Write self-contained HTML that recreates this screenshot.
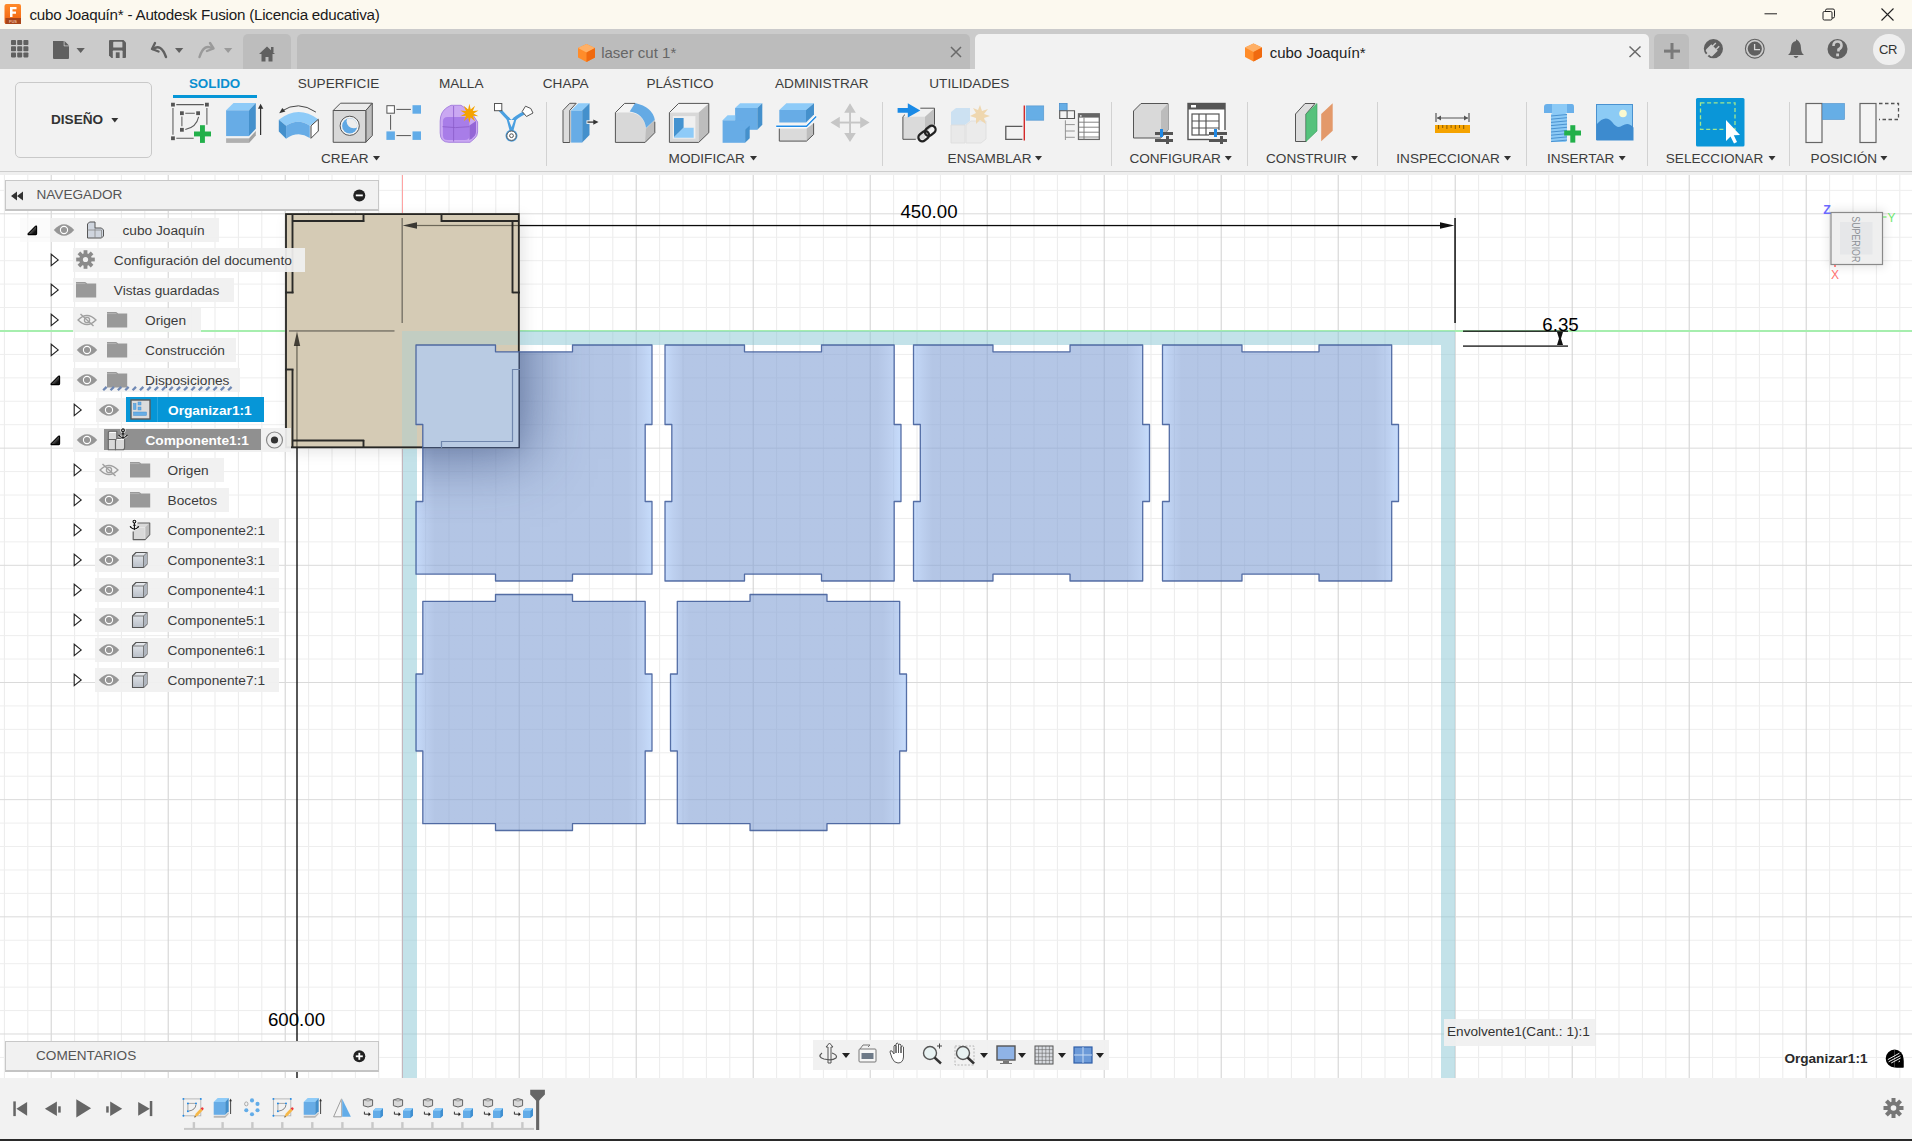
<!DOCTYPE html>
<html><head><meta charset="utf-8"><title>Fusion</title><style>
*{margin:0;padding:0;box-sizing:border-box}
html,body{width:1912px;height:1141px;overflow:hidden;background:#fff;
 font-family:"Liberation Sans",sans-serif}
.t{position:absolute;white-space:nowrap;line-height:1}
.b{position:absolute}
.s{position:absolute;overflow:visible}
</style></head>
<body>
<svg class="s" style="left:0;top:0" width="1912" height="1141" viewBox="0 0 1912 1141"><rect x="3.90" y="175" width="1" height="903" fill="#ebebeb"/><rect x="27.30" y="175" width="1" height="903" fill="#ebebeb"/><rect x="74.10" y="175" width="1" height="903" fill="#ebebeb"/><rect x="97.50" y="175" width="1" height="903" fill="#ebebeb"/><rect x="120.90" y="175" width="1" height="903" fill="#ebebeb"/><rect x="144.30" y="175" width="1" height="903" fill="#ebebeb"/><rect x="191.10" y="175" width="1" height="903" fill="#ebebeb"/><rect x="214.50" y="175" width="1" height="903" fill="#ebebeb"/><rect x="237.90" y="175" width="1" height="903" fill="#ebebeb"/><rect x="261.30" y="175" width="1" height="903" fill="#ebebeb"/><rect x="308.10" y="175" width="1" height="903" fill="#ebebeb"/><rect x="331.50" y="175" width="1" height="903" fill="#ebebeb"/><rect x="354.90" y="175" width="1" height="903" fill="#ebebeb"/><rect x="378.30" y="175" width="1" height="903" fill="#ebebeb"/><rect x="425.10" y="175" width="1" height="903" fill="#ebebeb"/><rect x="448.50" y="175" width="1" height="903" fill="#ebebeb"/><rect x="471.90" y="175" width="1" height="903" fill="#ebebeb"/><rect x="495.30" y="175" width="1" height="903" fill="#ebebeb"/><rect x="542.10" y="175" width="1" height="903" fill="#ebebeb"/><rect x="565.50" y="175" width="1" height="903" fill="#ebebeb"/><rect x="588.90" y="175" width="1" height="903" fill="#ebebeb"/><rect x="612.30" y="175" width="1" height="903" fill="#ebebeb"/><rect x="659.10" y="175" width="1" height="903" fill="#ebebeb"/><rect x="682.50" y="175" width="1" height="903" fill="#ebebeb"/><rect x="705.90" y="175" width="1" height="903" fill="#ebebeb"/><rect x="729.30" y="175" width="1" height="903" fill="#ebebeb"/><rect x="776.10" y="175" width="1" height="903" fill="#ebebeb"/><rect x="799.50" y="175" width="1" height="903" fill="#ebebeb"/><rect x="822.90" y="175" width="1" height="903" fill="#ebebeb"/><rect x="846.30" y="175" width="1" height="903" fill="#ebebeb"/><rect x="893.10" y="175" width="1" height="903" fill="#ebebeb"/><rect x="916.50" y="175" width="1" height="903" fill="#ebebeb"/><rect x="939.90" y="175" width="1" height="903" fill="#ebebeb"/><rect x="963.30" y="175" width="1" height="903" fill="#ebebeb"/><rect x="1010.10" y="175" width="1" height="903" fill="#ebebeb"/><rect x="1033.50" y="175" width="1" height="903" fill="#ebebeb"/><rect x="1056.90" y="175" width="1" height="903" fill="#ebebeb"/><rect x="1080.30" y="175" width="1" height="903" fill="#ebebeb"/><rect x="1127.10" y="175" width="1" height="903" fill="#ebebeb"/><rect x="1150.50" y="175" width="1" height="903" fill="#ebebeb"/><rect x="1173.90" y="175" width="1" height="903" fill="#ebebeb"/><rect x="1197.30" y="175" width="1" height="903" fill="#ebebeb"/><rect x="1244.10" y="175" width="1" height="903" fill="#ebebeb"/><rect x="1267.50" y="175" width="1" height="903" fill="#ebebeb"/><rect x="1290.90" y="175" width="1" height="903" fill="#ebebeb"/><rect x="1314.30" y="175" width="1" height="903" fill="#ebebeb"/><rect x="1361.10" y="175" width="1" height="903" fill="#ebebeb"/><rect x="1384.50" y="175" width="1" height="903" fill="#ebebeb"/><rect x="1407.90" y="175" width="1" height="903" fill="#ebebeb"/><rect x="1431.30" y="175" width="1" height="903" fill="#ebebeb"/><rect x="1478.10" y="175" width="1" height="903" fill="#ebebeb"/><rect x="1501.50" y="175" width="1" height="903" fill="#ebebeb"/><rect x="1524.90" y="175" width="1" height="903" fill="#ebebeb"/><rect x="1548.30" y="175" width="1" height="903" fill="#ebebeb"/><rect x="1595.10" y="175" width="1" height="903" fill="#ebebeb"/><rect x="1618.50" y="175" width="1" height="903" fill="#ebebeb"/><rect x="1641.90" y="175" width="1" height="903" fill="#ebebeb"/><rect x="1665.30" y="175" width="1" height="903" fill="#ebebeb"/><rect x="1712.10" y="175" width="1" height="903" fill="#ebebeb"/><rect x="1735.50" y="175" width="1" height="903" fill="#ebebeb"/><rect x="1758.90" y="175" width="1" height="903" fill="#ebebeb"/><rect x="1782.30" y="175" width="1" height="903" fill="#ebebeb"/><rect x="1829.10" y="175" width="1" height="903" fill="#ebebeb"/><rect x="1852.50" y="175" width="1" height="903" fill="#ebebeb"/><rect x="1875.90" y="175" width="1" height="903" fill="#ebebeb"/><rect x="1899.30" y="175" width="1" height="903" fill="#ebebeb"/><rect x="0" y="189.87" width="1912" height="1" fill="#eeeeee"/><rect x="0" y="236.73" width="1912" height="1" fill="#eeeeee"/><rect x="0" y="260.17" width="1912" height="1" fill="#eeeeee"/><rect x="0" y="283.60" width="1912" height="1" fill="#eeeeee"/><rect x="0" y="307.04" width="1912" height="1" fill="#eeeeee"/><rect x="0" y="353.90" width="1912" height="1" fill="#eeeeee"/><rect x="0" y="377.34" width="1912" height="1" fill="#eeeeee"/><rect x="0" y="400.77" width="1912" height="1" fill="#eeeeee"/><rect x="0" y="424.21" width="1912" height="1" fill="#eeeeee"/><rect x="0" y="471.07" width="1912" height="1" fill="#eeeeee"/><rect x="0" y="494.51" width="1912" height="1" fill="#eeeeee"/><rect x="0" y="517.94" width="1912" height="1" fill="#eeeeee"/><rect x="0" y="541.38" width="1912" height="1" fill="#eeeeee"/><rect x="0" y="588.24" width="1912" height="1" fill="#eeeeee"/><rect x="0" y="611.68" width="1912" height="1" fill="#eeeeee"/><rect x="0" y="635.11" width="1912" height="1" fill="#eeeeee"/><rect x="0" y="658.55" width="1912" height="1" fill="#eeeeee"/><rect x="0" y="705.41" width="1912" height="1" fill="#eeeeee"/><rect x="0" y="728.85" width="1912" height="1" fill="#eeeeee"/><rect x="0" y="752.28" width="1912" height="1" fill="#eeeeee"/><rect x="0" y="775.72" width="1912" height="1" fill="#eeeeee"/><rect x="0" y="822.58" width="1912" height="1" fill="#eeeeee"/><rect x="0" y="846.02" width="1912" height="1" fill="#eeeeee"/><rect x="0" y="869.45" width="1912" height="1" fill="#eeeeee"/><rect x="0" y="892.89" width="1912" height="1" fill="#eeeeee"/><rect x="0" y="939.75" width="1912" height="1" fill="#eeeeee"/><rect x="0" y="963.19" width="1912" height="1" fill="#eeeeee"/><rect x="0" y="986.62" width="1912" height="1" fill="#eeeeee"/><rect x="0" y="1010.06" width="1912" height="1" fill="#eeeeee"/><rect x="0" y="1056.92" width="1912" height="1" fill="#eeeeee"/><rect x="50.70" y="175" width="1" height="903" fill="#d0d0d0"/><rect x="167.70" y="175" width="1" height="903" fill="#d0d0d0"/><rect x="284.70" y="175" width="1" height="903" fill="#d0d0d0"/><rect x="401.70" y="175" width="1" height="903" fill="#d0d0d0"/><rect x="518.70" y="175" width="1" height="903" fill="#d0d0d0"/><rect x="635.70" y="175" width="1" height="903" fill="#d0d0d0"/><rect x="752.70" y="175" width="1" height="903" fill="#d0d0d0"/><rect x="869.70" y="175" width="1" height="903" fill="#d0d0d0"/><rect x="986.70" y="175" width="1" height="903" fill="#d0d0d0"/><rect x="1103.70" y="175" width="1" height="903" fill="#d0d0d0"/><rect x="1220.70" y="175" width="1" height="903" fill="#d0d0d0"/><rect x="1337.70" y="175" width="1" height="903" fill="#d0d0d0"/><rect x="1454.70" y="175" width="1" height="903" fill="#d0d0d0"/><rect x="1571.70" y="175" width="1" height="903" fill="#d0d0d0"/><rect x="1688.70" y="175" width="1" height="903" fill="#d0d0d0"/><rect x="1805.70" y="175" width="1" height="903" fill="#d0d0d0"/><rect x="0" y="213.30" width="1912" height="1" fill="#dadada"/><rect x="0" y="330.47" width="1912" height="1" fill="#dadada"/><rect x="0" y="447.64" width="1912" height="1" fill="#dadada"/><rect x="0" y="564.81" width="1912" height="1" fill="#dadada"/><rect x="0" y="681.98" width="1912" height="1" fill="#dadada"/><rect x="0" y="799.15" width="1912" height="1" fill="#dadada"/><rect x="0" y="916.32" width="1912" height="1" fill="#dadada"/><rect x="0" y="1033.49" width="1912" height="1" fill="#dadada"/></svg>
<div class="b" style="left:402px;top:175px;width:1px;height:903px;background:#ffa3a3"></div>
<div class="b" style="left:0px;top:330.4px;width:1912px;height:1.2px;background:#a6eeae"></div>
<div class="b" style="left:285px;top:213.2px;width:234.8px;height:235px;background:#d5cbb5;box-shadow:4px 4px 14px rgba(0,0,0,0.10)"></div>
<div class="b" style="left:402px;top:331px;width:15px;height:747px;background:rgba(140,200,212,0.52)"></div>
<div class="b" style="left:417px;top:331px;width:1024px;height:14px;background:rgba(140,200,212,0.52)"></div>
<div class="b" style="left:402px;top:331px;width:117.5px;height:14px;background:#c2cdc2"></div>
<div class="b" style="left:402px;top:345px;width:15px;height:103.5px;background:#c2cdc2"></div>
<div class="b" style="left:1441px;top:331px;width:14px;height:747px;background:rgba(140,200,212,0.52)"></div>
<svg class="s" style="left:0px;top:0px;" width="1912" height="1141" viewBox="0 0 1912 1141"><rect x="286" y="214.1" width="232.8" height="233.2" fill="none" stroke="#262624" stroke-width="1.8"/><line x1="292.5" y1="221" x2="364.2" y2="221" stroke="#2a2a28" stroke-width="1.9"/><line x1="363.5" y1="214" x2="363.5" y2="222" stroke="#2a2a28" stroke-width="1.9"/><line x1="292.5" y1="214" x2="292.5" y2="293.2" stroke="#2a2a28" stroke-width="1.9"/><line x1="285" y1="292.5" x2="293.5" y2="292.5" stroke="#2a2a28" stroke-width="1.9"/><line x1="441.5" y1="221" x2="519" y2="221" stroke="#2a2a28" stroke-width="1.9"/><line x1="441.5" y1="214" x2="441.5" y2="222" stroke="#2a2a28" stroke-width="1.9"/><line x1="512.5" y1="221" x2="512.5" y2="293.2" stroke="#2a2a28" stroke-width="1.9"/><line x1="512.5" y1="292.5" x2="520" y2="292.5" stroke="#2a2a28" stroke-width="1.9"/><line x1="292.5" y1="369.5" x2="292.5" y2="448" stroke="#2a2a28" stroke-width="1.9"/><line x1="285" y1="369.5" x2="293.5" y2="369.5" stroke="#2a2a28" stroke-width="1.9"/><line x1="292.5" y1="440.5" x2="364.2" y2="440.5" stroke="#2a2a28" stroke-width="1.9"/><line x1="363.5" y1="440" x2="363.5" y2="448" stroke="#2a2a28" stroke-width="1.9"/><line x1="441.5" y1="440.5" x2="512.5" y2="440.5" stroke="#2a2a28" stroke-width="1.9"/><line x1="441.5" y1="440" x2="441.5" y2="448" stroke="#2a2a28" stroke-width="1.9"/><line x1="512.5" y1="369.5" x2="512.5" y2="448" stroke="#2a2a28" stroke-width="1.9"/><line x1="512.5" y1="369.5" x2="520" y2="369.5" stroke="#2a2a28" stroke-width="1.9"/></svg>
<svg class="s" style="left:0px;top:0px;" width="1912" height="1141" viewBox="0 0 1912 1141"><defs><filter id="bl30" x="-80%" y="-80%" width="260%" height="260%"><feGaussianBlur stdDeviation="28"/></filter><linearGradient id="pg" x1="0" y1="0" x2="1" y2="0"><stop offset="0" stop-color="rgb(168,200,248)" stop-opacity="0.66"/><stop offset="0.035" stop-color="rgb(150,180,230)" stop-opacity="0.63"/><stop offset="0.08" stop-color="rgb(134,163,214)" stop-opacity="0.62"/><stop offset="0.9" stop-color="rgb(134,163,214)" stop-opacity="0.62"/><stop offset="0.955" stop-color="rgb(150,180,230)" stop-opacity="0.63"/><stop offset="1" stop-color="rgb(172,204,250)" stop-opacity="0.68"/></linearGradient><clipPath id="pc0"><polygon points="416.0,345.0 495.5,345.0 495.5,351.8 572.5,351.8 572.5,345.0 652.0,345.0 652.0,424.5 645.2,424.5 645.2,501.5 652.0,501.5 652.0,574.2 572.5,574.2 572.5,581.0 495.5,581.0 495.5,574.2 416.0,574.2 416.0,501.5 422.8,501.5 422.8,424.5 416.0,424.5"/></clipPath><clipPath id="pc1"><polygon points="665.0,345.0 744.5,345.0 744.5,351.8 821.5,351.8 821.5,345.0 894.2,345.0 894.2,424.5 901.0,424.5 901.0,501.5 894.2,501.5 894.2,581.0 821.5,581.0 821.5,574.2 744.5,574.2 744.5,581.0 665.0,581.0 665.0,501.5 671.8,501.5 671.8,424.5 665.0,424.5"/></clipPath><clipPath id="pc2"><polygon points="913.5,345.0 993.0,345.0 993.0,351.8 1070.0,351.8 1070.0,345.0 1142.7,345.0 1142.7,424.5 1149.5,424.5 1149.5,501.5 1142.7,501.5 1142.7,581.0 1070.0,581.0 1070.0,574.2 993.0,574.2 993.0,581.0 913.5,581.0 913.5,501.5 920.3,501.5 920.3,424.5 913.5,424.5"/></clipPath><clipPath id="pc3"><polygon points="1162.5,345.0 1242.0,345.0 1242.0,351.8 1319.0,351.8 1319.0,345.0 1391.7,345.0 1391.7,424.5 1398.5,424.5 1398.5,501.5 1391.7,501.5 1391.7,581.0 1319.0,581.0 1319.0,574.2 1242.0,574.2 1242.0,581.0 1162.5,581.0 1162.5,501.5 1169.3,501.5 1169.3,424.5 1162.5,424.5"/></clipPath><clipPath id="pc4"><polygon points="422.8,601.3 495.5,601.3 495.5,594.5 572.5,594.5 572.5,601.3 645.2,601.3 645.2,674.0 652.0,674.0 652.0,751.0 645.2,751.0 645.2,823.7 572.5,823.7 572.5,830.5 495.5,830.5 495.5,823.7 422.8,823.7 422.8,751.0 416.0,751.0 416.0,674.0 422.8,674.0"/></clipPath><clipPath id="pc5"><polygon points="677.3,601.3 750.0,601.3 750.0,594.5 827.0,594.5 827.0,601.3 899.7,601.3 899.7,674.0 906.5,674.0 906.5,751.0 899.7,751.0 899.7,823.7 827.0,823.7 827.0,830.5 750.0,830.5 750.0,823.7 677.3,823.7 677.3,751.0 670.5,751.0 670.5,674.0 677.3,674.0"/></clipPath><clipPath id="beigeclip"><rect x="285" y="214" width="235" height="235"/></clipPath></defs><polygon points="416.0,345.0 495.5,345.0 495.5,351.8 572.5,351.8 572.5,345.0 652.0,345.0 652.0,424.5 645.2,424.5 645.2,501.5 652.0,501.5 652.0,574.2 572.5,574.2 572.5,581.0 495.5,581.0 495.5,574.2 416.0,574.2 416.0,501.5 422.8,501.5 422.8,424.5 416.0,424.5" fill="url(#pg)"/><polygon points="665.0,345.0 744.5,345.0 744.5,351.8 821.5,351.8 821.5,345.0 894.2,345.0 894.2,424.5 901.0,424.5 901.0,501.5 894.2,501.5 894.2,581.0 821.5,581.0 821.5,574.2 744.5,574.2 744.5,581.0 665.0,581.0 665.0,501.5 671.8,501.5 671.8,424.5 665.0,424.5" fill="url(#pg)"/><polygon points="913.5,345.0 993.0,345.0 993.0,351.8 1070.0,351.8 1070.0,345.0 1142.7,345.0 1142.7,424.5 1149.5,424.5 1149.5,501.5 1142.7,501.5 1142.7,581.0 1070.0,581.0 1070.0,574.2 993.0,574.2 993.0,581.0 913.5,581.0 913.5,501.5 920.3,501.5 920.3,424.5 913.5,424.5" fill="url(#pg)"/><polygon points="1162.5,345.0 1242.0,345.0 1242.0,351.8 1319.0,351.8 1319.0,345.0 1391.7,345.0 1391.7,424.5 1398.5,424.5 1398.5,501.5 1391.7,501.5 1391.7,581.0 1319.0,581.0 1319.0,574.2 1242.0,574.2 1242.0,581.0 1162.5,581.0 1162.5,501.5 1169.3,501.5 1169.3,424.5 1162.5,424.5" fill="url(#pg)"/><polygon points="422.8,601.3 495.5,601.3 495.5,594.5 572.5,594.5 572.5,601.3 645.2,601.3 645.2,674.0 652.0,674.0 652.0,751.0 645.2,751.0 645.2,823.7 572.5,823.7 572.5,830.5 495.5,830.5 495.5,823.7 422.8,823.7 422.8,751.0 416.0,751.0 416.0,674.0 422.8,674.0" fill="url(#pg)"/><polygon points="677.3,601.3 750.0,601.3 750.0,594.5 827.0,594.5 827.0,601.3 899.7,601.3 899.7,674.0 906.5,674.0 906.5,751.0 899.7,751.0 899.7,823.7 827.0,823.7 827.0,830.5 750.0,830.5 750.0,823.7 677.3,823.7 677.3,751.0 670.5,751.0 670.5,674.0 677.3,674.0" fill="url(#pg)"/></svg>
<div class="b" style="left:0;top:0;width:1912px;height:1141px;clip-path:polygon(416.0px 345.0px, 495.5px 345.0px, 495.5px 351.8px, 572.5px 351.8px, 572.5px 345.0px, 652.0px 345.0px, 652.0px 424.5px, 645.2px 424.5px, 645.2px 501.5px, 652.0px 501.5px, 652.0px 574.2px, 572.5px 574.2px, 572.5px 581.0px, 495.5px 581.0px, 495.5px 574.2px, 416.0px 574.2px, 416.0px 501.5px, 422.8px 501.5px, 422.8px 424.5px, 416.0px 424.5px)"><div class="b" style="left:285px;top:214px;width:235px;height:235px;box-shadow:10px 10px 56px 0px rgba(30,50,100,0.5)"></div></div>
<svg class="s" style="left:0px;top:0px;" width="1912" height="1141" viewBox="0 0 1912 1141"><defs><clipPath id="pcx0"><polygon points="416.0,345.0 495.5,345.0 495.5,351.8 572.5,351.8 572.5,345.0 652.0,345.0 652.0,424.5 645.2,424.5 645.2,501.5 652.0,501.5 652.0,574.2 572.5,574.2 572.5,581.0 495.5,581.0 495.5,574.2 416.0,574.2 416.0,501.5 422.8,501.5 422.8,424.5 416.0,424.5"/></clipPath></defs><g clip-path="url(#pcx0)"><rect x="285" y="214" width="235" height="235" fill="rgb(185,203,227)"/><rect x="285.6" y="214" width="233.6" height="233.8" fill="none" stroke="#2e3b58" stroke-width="1.4"/><g stroke="#6f86ad" stroke-width="1.2" fill="none"><path d="M441.5,448 V441.5 H512.5 V369.5 H520"/></g></g><polygon points="416.0,345.0 495.5,345.0 495.5,351.8 572.5,351.8 572.5,345.0 652.0,345.0 652.0,424.5 645.2,424.5 645.2,501.5 652.0,501.5 652.0,574.2 572.5,574.2 572.5,581.0 495.5,581.0 495.5,574.2 416.0,574.2 416.0,501.5 422.8,501.5 422.8,424.5 416.0,424.5" fill="none" stroke="rgba(60,88,150,0.85)" stroke-width="1.3" stroke-linejoin="round"/><polygon points="665.0,345.0 744.5,345.0 744.5,351.8 821.5,351.8 821.5,345.0 894.2,345.0 894.2,424.5 901.0,424.5 901.0,501.5 894.2,501.5 894.2,581.0 821.5,581.0 821.5,574.2 744.5,574.2 744.5,581.0 665.0,581.0 665.0,501.5 671.8,501.5 671.8,424.5 665.0,424.5" fill="none" stroke="rgba(60,88,150,0.85)" stroke-width="1.3" stroke-linejoin="round"/><polygon points="913.5,345.0 993.0,345.0 993.0,351.8 1070.0,351.8 1070.0,345.0 1142.7,345.0 1142.7,424.5 1149.5,424.5 1149.5,501.5 1142.7,501.5 1142.7,581.0 1070.0,581.0 1070.0,574.2 993.0,574.2 993.0,581.0 913.5,581.0 913.5,501.5 920.3,501.5 920.3,424.5 913.5,424.5" fill="none" stroke="rgba(60,88,150,0.85)" stroke-width="1.3" stroke-linejoin="round"/><polygon points="1162.5,345.0 1242.0,345.0 1242.0,351.8 1319.0,351.8 1319.0,345.0 1391.7,345.0 1391.7,424.5 1398.5,424.5 1398.5,501.5 1391.7,501.5 1391.7,581.0 1319.0,581.0 1319.0,574.2 1242.0,574.2 1242.0,581.0 1162.5,581.0 1162.5,501.5 1169.3,501.5 1169.3,424.5 1162.5,424.5" fill="none" stroke="rgba(60,88,150,0.85)" stroke-width="1.3" stroke-linejoin="round"/><polygon points="422.8,601.3 495.5,601.3 495.5,594.5 572.5,594.5 572.5,601.3 645.2,601.3 645.2,674.0 652.0,674.0 652.0,751.0 645.2,751.0 645.2,823.7 572.5,823.7 572.5,830.5 495.5,830.5 495.5,823.7 422.8,823.7 422.8,751.0 416.0,751.0 416.0,674.0 422.8,674.0" fill="none" stroke="rgba(60,88,150,0.85)" stroke-width="1.3" stroke-linejoin="round"/><polygon points="677.3,601.3 750.0,601.3 750.0,594.5 827.0,594.5 827.0,601.3 899.7,601.3 899.7,674.0 906.5,674.0 906.5,751.0 899.7,751.0 899.7,823.7 827.0,823.7 827.0,830.5 750.0,830.5 750.0,823.7 677.3,823.7 677.3,751.0 670.5,751.0 670.5,674.0 677.3,674.0" fill="none" stroke="rgba(60,88,150,0.85)" stroke-width="1.3" stroke-linejoin="round"/></svg>
<svg class="s" style="left:0px;top:0px;" width="1912" height="1141" viewBox="0 0 1912 1141"><rect x="417" y="224.9" width="102.5" height="1.2" fill="rgba(40,36,28,0.6)"/><rect x="519.5" y="224.9" width="921" height="1.3" fill="#0a0a0a"/><path d="M402.6,225.5 L417,222.3 L417,228.7 Z" fill="rgba(15,15,15,0.78)"/><path d="M1454.4,225.5 L1440,222.3 L1440,228.7 Z" fill="#111"/><rect x="1454.3" y="218" width="1.5" height="105" fill="#111"/><rect x="401.6" y="218" width="1.1" height="105" fill="rgba(15,15,15,0.6)"/><rect x="289" y="330.4" width="105.5" height="1.1" fill="rgba(15,15,15,0.6)"/><rect x="296.3" y="345" width="1.3" height="103" fill="rgba(40,36,28,0.6)"/><rect x="296.3" y="448" width="1.4" height="630" fill="#111"/><path d="M297,331.5 L293.8,346 L300.2,346 Z" fill="rgba(30,28,22,0.8)"/><rect x="1463" y="330.5" width="105" height="1.4" fill="#222"/><rect x="1463" y="345.4" width="105" height="1.4" fill="#222"/><path d="M1557,332 L1563,332 L1561,338.5 L1563,345 L1557,345 L1559,338.5 Z" fill="#111"/></svg>
<div class="t" style="left:629.00px;top:202.67px;width:600px;text-align:center;font-size:18.7px;color:#000;font-weight:normal;">450.00</div>
<div class="t" style="left:1260.50px;top:316.37px;width:600px;text-align:center;font-size:18.7px;color:#000;font-weight:normal;">6.35</div>
<div class="t" style="left:-3.50px;top:1011.17px;width:600px;text-align:center;font-size:18.7px;color:#000;font-weight:normal;">600.00</div>
<div class="b" style="left:1831px;top:212px;width:52px;height:53px;box-shadow:0 0 9px 2px rgba(0,0,0,0.10)"></div>
<svg class="s" style="left:0px;top:0px;" width="1912" height="1141" viewBox="0 0 1912 1141"><rect x="1831" y="212.5" width="51.5" height="52" fill="#efefef" stroke="#8a8a8a" stroke-width="1.2"/><rect x="1840" y="222" width="32.5" height="32.5" fill="#e6e7e9"/><text x="0" y="0" transform="translate(1852.1,216.3) rotate(90) scale(0.76,1)" font-family="Liberation Sans" font-size="11.6" fill="#8c9096" letter-spacing="0">SUPERIOR</text><text x="1823.3" y="214.3" font-family="Liberation Sans" font-size="12.5" font-weight="bold" fill="#6a6aff">Z</text><text x="1887.5" y="221.5" font-family="Liberation Sans" font-size="12" fill="#6ee86e">Y</text><text x="1831" y="278.5" font-family="Liberation Sans" font-size="12" fill="#ff7070">X</text><line x1="1883" y1="217" x2="1886.5" y2="217" stroke="#6ee86e" stroke-width="1.2"/><circle cx="1835" cy="266" r="0.9" fill="#ff5050"/></svg>
<div class="b" style="left:5px;top:180px;width:374px;height:31px;background:#f1f1f1;border:1px solid #c8c8c8;border-bottom:2px solid #c4c4c4"></div><svg class="s" style="left:10px;top:190px;" width="16" height="12" viewBox="0 0 16 12"><path d="M1,6 L7,1.5 V10.5 Z M7,6 L13,1.5 V10.5 Z" fill="#333"/></svg><div class="t" style="left:36.50px;top:188.49px;font-size:13.6px;color:#555;font-weight:normal;">NAVEGADOR</div><svg class="s" style="left:352px;top:188px;" width="15" height="15" viewBox="0 0 15 15"><circle cx="7.3" cy="7.4" r="6" fill="#222"/><rect x="3.8" y="6.5" width="7" height="1.8" fill="#fff"/></svg><div class="b" style="left:20px;top:217.6px;width:30px;height:24px;background:rgba(248,248,248,0.6)"></div><div class="b" style="left:50px;top:217.6px;width:169px;height:24.5px;background:rgba(240,240,240,0.93)"></div><svg class="s" style="left:27.4px;top:225.0px;" width="11" height="10" viewBox="0 0 11 10"><defs><linearGradient id="tg" x1="0" y1="0" x2="1" y2="1"><stop offset="0" stop-color="#d0d0d0"/><stop offset="0.75" stop-color="#111"/></linearGradient></defs><path d="M1.2,8.6 L8.6,1.2 Q9.6,0.6 9.6,1.8 V8.8 Q9.6,9.6 8.8,9.6 H1.8 Q0.6,9.6 1.2,8.6 Z" fill="url(#tg)" stroke="#000" stroke-width="1.1" stroke-linejoin="round"/></svg><svg class="s" style="left:54px;top:223.6px;" width="20" height="12" viewBox="0 0 20 12"><path d="M-0.2,6 Q10,-5.6 20.2,6 Q10,17.6 -0.2,6 Z" fill="#969696"/><circle cx="10" cy="6" r="3.6" fill="none" stroke="#fff" stroke-width="1.1"/><circle cx="10" cy="6" r="2.2" fill="#969696"/></svg><svg class="s" style="left:86px;top:220.1px;" width="19" height="19" viewBox="0 0 19 19"><path d="M1.5,4 L3.5,2 H9 V8 H15.5 L17.5,10 V16 L15.5,18 H1.5 Z" fill="#cfd5de" stroke="#555" stroke-width="1"/><path d="M1.5,10 H15.5 V18 M9,8 V18" stroke="#888" stroke-width="0.8" fill="none"/></svg><div class="t" style="left:122.50px;top:223.60px;font-size:13.7px;color:#3c3c3c;font-weight:normal;">cubo Joaquín</div><div class="b" style="left:73px;top:247.60000000000002px;width:232px;height:24.5px;background:rgba(240,240,240,0.93)"></div><svg class="s" style="left:50.3px;top:252.70000000000002px;" width="10" height="14" viewBox="0 0 10 14"><path d="M1.2,1.2 L8.2,6.9 L1.2,12.6 Z" fill="#fff" stroke="#222" stroke-width="1.1" stroke-linejoin="miter"/></svg><svg class="s" style="left:76px;top:250.10000000000002px;" width="19" height="19" viewBox="0 0 19 19"><g transform="translate(9.5,9.5)"><circle r="6.3" fill="#8a8a8a"/><rect x="-1.9" y="-9.3" width="3.8" height="4.5" fill="#8a8a8a" transform="rotate(0)"/><rect x="-1.9" y="-9.3" width="3.8" height="4.5" fill="#8a8a8a" transform="rotate(45)"/><rect x="-1.9" y="-9.3" width="3.8" height="4.5" fill="#8a8a8a" transform="rotate(90)"/><rect x="-1.9" y="-9.3" width="3.8" height="4.5" fill="#8a8a8a" transform="rotate(135)"/><rect x="-1.9" y="-9.3" width="3.8" height="4.5" fill="#8a8a8a" transform="rotate(180)"/><rect x="-1.9" y="-9.3" width="3.8" height="4.5" fill="#8a8a8a" transform="rotate(225)"/><rect x="-1.9" y="-9.3" width="3.8" height="4.5" fill="#8a8a8a" transform="rotate(270)"/><rect x="-1.9" y="-9.3" width="3.8" height="4.5" fill="#8a8a8a" transform="rotate(315)"/><circle r="2.6" fill="#f0f0f0"/></g></svg><div class="t" style="left:113.80px;top:253.60px;font-size:13.7px;color:#3c3c3c;font-weight:normal;">Configuración del documento</div><div class="b" style="left:73px;top:277.6px;width:161px;height:24.5px;background:rgba(240,240,240,0.93)"></div><svg class="s" style="left:50.3px;top:282.70000000000005px;" width="10" height="14" viewBox="0 0 10 14"><path d="M1.2,1.2 L8.2,6.9 L1.2,12.6 Z" fill="#fff" stroke="#222" stroke-width="1.1" stroke-linejoin="miter"/></svg><svg class="s" style="left:76px;top:282.0px;" width="21" height="16" viewBox="0 0 21 16"><path d="M0,0 H9.2 L11.2,1.6 H20.2 V15.6 H0 Z" fill="#999"/><path d="M0,1.6 H9.4" stroke="#b9b9b9" stroke-width="0.8"/></svg><div class="t" style="left:113.80px;top:283.60px;font-size:13.7px;color:#3c3c3c;font-weight:normal;">Vistas guardadas</div><div class="b" style="left:73px;top:307.6px;width:127.5px;height:24.5px;background:rgba(240,240,240,0.93)"></div><svg class="s" style="left:50.3px;top:312.70000000000005px;" width="10" height="14" viewBox="0 0 10 14"><path d="M1.2,1.2 L8.2,6.9 L1.2,12.6 Z" fill="#fff" stroke="#222" stroke-width="1.1" stroke-linejoin="miter"/></svg><svg class="s" style="left:76.5px;top:313.6px;" width="20" height="12" viewBox="0 0 20 12"><path d="M1,6 Q10,-3 19,6 Q10,15 1,6 Z" fill="none" stroke="#a0a0a0" stroke-width="1.3"/><circle cx="10" cy="6" r="2.6" fill="none" stroke="#a0a0a0" stroke-width="1.3"/><line x1="3.5" y1="0" x2="16.5" y2="12" stroke="#a0a0a0" stroke-width="1.4"/></svg><svg class="s" style="left:107.2px;top:312.0px;" width="21" height="16" viewBox="0 0 21 16"><path d="M0,0 H9.2 L11.2,1.6 H20.2 V15.6 H0 Z" fill="#999"/><path d="M0,1.6 H9.4" stroke="#b9b9b9" stroke-width="0.8"/></svg><div class="t" style="left:145.00px;top:313.60px;font-size:13.7px;color:#3c3c3c;font-weight:normal;">Origen</div><div class="b" style="left:73px;top:337.6px;width:163px;height:24.5px;background:rgba(240,240,240,0.93)"></div><svg class="s" style="left:50.3px;top:342.70000000000005px;" width="10" height="14" viewBox="0 0 10 14"><path d="M1.2,1.2 L8.2,6.9 L1.2,12.6 Z" fill="#fff" stroke="#222" stroke-width="1.1" stroke-linejoin="miter"/></svg><svg class="s" style="left:76.5px;top:343.6px;" width="20" height="12" viewBox="0 0 20 12"><path d="M-0.2,6 Q10,-5.6 20.2,6 Q10,17.6 -0.2,6 Z" fill="#969696"/><circle cx="10" cy="6" r="3.6" fill="none" stroke="#fff" stroke-width="1.1"/><circle cx="10" cy="6" r="2.2" fill="#969696"/></svg><svg class="s" style="left:107.2px;top:342.0px;" width="21" height="16" viewBox="0 0 21 16"><path d="M0,0 H9.2 L11.2,1.6 H20.2 V15.6 H0 Z" fill="#999"/><path d="M0,1.6 H9.4" stroke="#b9b9b9" stroke-width="0.8"/></svg><div class="t" style="left:145.00px;top:343.60px;font-size:13.7px;color:#3c3c3c;font-weight:normal;">Construcción</div><div class="b" style="left:73px;top:367.6px;width:167px;height:24.5px;background:rgba(240,240,240,0.93)"></div><svg class="s" style="left:50.3px;top:375.0px;" width="11" height="10" viewBox="0 0 11 10"><defs><linearGradient id="tg" x1="0" y1="0" x2="1" y2="1"><stop offset="0" stop-color="#d0d0d0"/><stop offset="0.75" stop-color="#111"/></linearGradient></defs><path d="M1.2,8.6 L8.6,1.2 Q9.6,0.6 9.6,1.8 V8.8 Q9.6,9.6 8.8,9.6 H1.8 Q0.6,9.6 1.2,8.6 Z" fill="url(#tg)" stroke="#000" stroke-width="1.1" stroke-linejoin="round"/></svg><svg class="s" style="left:76.5px;top:373.6px;" width="20" height="12" viewBox="0 0 20 12"><path d="M-0.2,6 Q10,-5.6 20.2,6 Q10,17.6 -0.2,6 Z" fill="#969696"/><circle cx="10" cy="6" r="3.6" fill="none" stroke="#fff" stroke-width="1.1"/><circle cx="10" cy="6" r="2.2" fill="#969696"/></svg><svg class="s" style="left:107.2px;top:372.0px;" width="21" height="16" viewBox="0 0 21 16"><path d="M0,0 H9.2 L11.2,1.6 H20.2 V15.6 H0 Z" fill="#999"/><path d="M0,1.6 H9.4" stroke="#b9b9b9" stroke-width="0.8"/></svg><div class="t" style="left:145.00px;top:373.60px;font-size:13.7px;color:#3c3c3c;font-weight:normal;">Disposiciones</div><svg class="s" style="left:100px;top:383px;" width="140" height="10" viewBox="0 0 140 10"><line x1="3.20" y1="7.3" x2="6.60" y2="3.9" stroke="#6f88b4" stroke-width="2.3"/><line x1="10.55" y1="7.3" x2="13.95" y2="3.9" stroke="#6f88b4" stroke-width="2.3"/><line x1="17.90" y1="7.3" x2="21.30" y2="3.9" stroke="#6f88b4" stroke-width="2.3"/><line x1="25.25" y1="7.3" x2="28.65" y2="3.9" stroke="#6f88b4" stroke-width="2.3"/><line x1="32.60" y1="7.3" x2="36.00" y2="3.9" stroke="#6f88b4" stroke-width="2.3"/><line x1="39.95" y1="7.3" x2="43.35" y2="3.9" stroke="#6f88b4" stroke-width="2.3"/><line x1="47.30" y1="7.3" x2="50.70" y2="3.9" stroke="#6f88b4" stroke-width="2.3"/><line x1="54.65" y1="7.3" x2="58.05" y2="3.9" stroke="#6f88b4" stroke-width="2.3"/><line x1="62.00" y1="7.3" x2="65.40" y2="3.9" stroke="#6f88b4" stroke-width="2.3"/><line x1="69.35" y1="7.3" x2="72.75" y2="3.9" stroke="#6f88b4" stroke-width="2.3"/><line x1="76.70" y1="7.3" x2="80.10" y2="3.9" stroke="#6f88b4" stroke-width="2.3"/><line x1="84.05" y1="7.3" x2="87.45" y2="3.9" stroke="#6f88b4" stroke-width="2.3"/><line x1="91.40" y1="7.3" x2="94.80" y2="3.9" stroke="#6f88b4" stroke-width="2.3"/><line x1="98.75" y1="7.3" x2="102.15" y2="3.9" stroke="#6f88b4" stroke-width="2.3"/><line x1="106.10" y1="7.3" x2="109.50" y2="3.9" stroke="#6f88b4" stroke-width="2.3"/><line x1="113.45" y1="7.3" x2="116.85" y2="3.9" stroke="#6f88b4" stroke-width="2.3"/><line x1="120.80" y1="7.3" x2="124.20" y2="3.9" stroke="#6f88b4" stroke-width="2.3"/><line x1="128.15" y1="7.3" x2="131.55" y2="3.9" stroke="#6f88b4" stroke-width="2.3"/></svg><div class="b" style="left:95.5px;top:397.6px;width:31px;height:24.5px;background:rgba(240,240,240,0.93)"></div><svg class="s" style="left:72.8px;top:402.70000000000005px;" width="10" height="14" viewBox="0 0 10 14"><path d="M1.2,1.2 L8.2,6.9 L1.2,12.6 Z" fill="#fff" stroke="#222" stroke-width="1.1" stroke-linejoin="miter"/></svg><svg class="s" style="left:98.5px;top:403.6px;" width="20" height="12" viewBox="0 0 20 12"><path d="M-0.2,6 Q10,-5.6 20.2,6 Q10,17.6 -0.2,6 Z" fill="#969696"/><circle cx="10" cy="6" r="3.6" fill="none" stroke="#fff" stroke-width="1.1"/><circle cx="10" cy="6" r="2.2" fill="#969696"/></svg><div class="b" style="left:126px;top:397.3px;width:137.5px;height:25px;background:#0696d7"></div><div class="b" style="left:156.5px;top:397.3px;width:1px;height:25px;background:#2aa6de"></div><svg class="s" style="left:129.5px;top:399.40000000000003px;" width="22" height="21" viewBox="0 0 22 21"><rect x="1" y="1" width="19" height="19" fill="#dcdcdc" stroke="#5a5a5a" stroke-width="1.4"/><rect x="3.5" y="4.5" width="2.5" height="6" fill="#66aee6" stroke="#4a8fcc" stroke-width="0.5"/><rect x="8" y="3" width="3" height="3" fill="#66aee6" stroke="#4a8fcc" stroke-width="0.5"/><rect x="8" y="8" width="3" height="3" fill="#66aee6" stroke="#4a8fcc" stroke-width="0.5"/><rect x="3.5" y="13" width="13" height="3.5" fill="#66aee6" stroke="#4a8fcc" stroke-width="0.5"/></svg><div class="t" style="left:168.00px;top:403.60px;font-size:13.7px;color:#fff;font-weight:bold;">Organizar1:1</div><div class="b" style="left:73px;top:427.6px;width:218px;height:24.5px;background:rgba(240,240,240,0.93)"></div><svg class="s" style="left:50.3px;top:435.0px;" width="11" height="10" viewBox="0 0 11 10"><defs><linearGradient id="tg" x1="0" y1="0" x2="1" y2="1"><stop offset="0" stop-color="#d0d0d0"/><stop offset="0.75" stop-color="#111"/></linearGradient></defs><path d="M1.2,8.6 L8.6,1.2 Q9.6,0.6 9.6,1.8 V8.8 Q9.6,9.6 8.8,9.6 H1.8 Q0.6,9.6 1.2,8.6 Z" fill="url(#tg)" stroke="#000" stroke-width="1.1" stroke-linejoin="round"/></svg><svg class="s" style="left:76.5px;top:433.6px;" width="20" height="12" viewBox="0 0 20 12"><path d="M-0.2,6 Q10,-5.6 20.2,6 Q10,17.6 -0.2,6 Z" fill="#969696"/><circle cx="10" cy="6" r="3.6" fill="none" stroke="#fff" stroke-width="1.1"/><circle cx="10" cy="6" r="2.2" fill="#969696"/></svg><div class="b" style="left:104px;top:429.40000000000003px;width:156.5px;height:20.5px;background:#909090"></div><svg class="s" style="left:100px;top:427.6px;" width="32" height="24" viewBox="0 0 32 24"><g stroke="#666" stroke-width="1.1" fill="#d9d9d9" stroke-linejoin="round"><path d="M8.3,4.8 Q8.3,3.2 9.9,3.2 H16.8 V11.5 H8.3 Z"/><path d="M8.3,11.5 H15.5 V21.8 H8.3 Z"/><path d="M15.5,12.5 Q16.5,10.5 18.5,10.5 H24.6 V19.5 Q24.6,21.8 22.5,21.8 H15.5 Z"/></g><path d="M9.5,4.5 H16 M16.5,11.5 H24" stroke="#fff" stroke-width="0.9"/><g stroke="#fff" stroke-width="2.6" fill="none" opacity="0.7"><circle cx="23" cy="2.3000000000000007" r="1.5"/><path d="M23,3.9000000000000004 V10.5"/><path d="M19,7.5 Q23,12.0 27,7.5"/></g><g stroke="#111" stroke-width="1.1" fill="none"><circle cx="23" cy="2.3000000000000007" r="1.4"/><path d="M23,3.7 V10.7 M21.7,5.9 H24.3"/><path d="M19,7.5 Q23,12.0 27,7.5"/></g><path d="M18.2,6.7 L20,6.9 L19,8.5 Z M27.8,6.7 L26,6.9 L27,8.5 Z" fill="#111"/></svg><div class="t" style="left:145.40px;top:433.60px;font-size:13.7px;color:#fff;font-weight:bold;">Componente1:1</div><svg class="s" style="left:265px;top:429.6px;" width="20" height="20" viewBox="0 0 20 20"><circle cx="9.5" cy="10" r="8" fill="#eee" stroke="#888" stroke-width="1.2"/><circle cx="9.5" cy="10" r="3.6" fill="#333"/></svg><div class="b" style="left:95px;top:457.6px;width:129px;height:24.5px;background:rgba(240,240,240,0.93)"></div><svg class="s" style="left:72.8px;top:462.70000000000005px;" width="10" height="14" viewBox="0 0 10 14"><path d="M1.2,1.2 L8.2,6.9 L1.2,12.6 Z" fill="#fff" stroke="#222" stroke-width="1.1" stroke-linejoin="miter"/></svg><svg class="s" style="left:99px;top:463.6px;" width="20" height="12" viewBox="0 0 20 12"><path d="M1,6 Q10,-3 19,6 Q10,15 1,6 Z" fill="none" stroke="#a0a0a0" stroke-width="1.3"/><circle cx="10" cy="6" r="2.6" fill="none" stroke="#a0a0a0" stroke-width="1.3"/><line x1="3.5" y1="0" x2="16.5" y2="12" stroke="#a0a0a0" stroke-width="1.4"/></svg><svg class="s" style="left:129.5px;top:462.0px;" width="21" height="16" viewBox="0 0 21 16"><path d="M0,0 H9.2 L11.2,1.6 H20.2 V15.6 H0 Z" fill="#999"/><path d="M0,1.6 H9.4" stroke="#b9b9b9" stroke-width="0.8"/></svg><div class="t" style="left:167.60px;top:463.60px;font-size:13.7px;color:#3c3c3c;font-weight:normal;">Origen</div><div class="b" style="left:95px;top:487.6px;width:134px;height:24.5px;background:rgba(240,240,240,0.93)"></div><svg class="s" style="left:72.8px;top:492.70000000000005px;" width="10" height="14" viewBox="0 0 10 14"><path d="M1.2,1.2 L8.2,6.9 L1.2,12.6 Z" fill="#fff" stroke="#222" stroke-width="1.1" stroke-linejoin="miter"/></svg><svg class="s" style="left:99px;top:493.6px;" width="20" height="12" viewBox="0 0 20 12"><path d="M-0.2,6 Q10,-5.6 20.2,6 Q10,17.6 -0.2,6 Z" fill="#969696"/><circle cx="10" cy="6" r="3.6" fill="none" stroke="#fff" stroke-width="1.1"/><circle cx="10" cy="6" r="2.2" fill="#969696"/></svg><svg class="s" style="left:129.5px;top:492.0px;" width="21" height="16" viewBox="0 0 21 16"><path d="M0,0 H9.2 L11.2,1.6 H20.2 V15.6 H0 Z" fill="#999"/><path d="M0,1.6 H9.4" stroke="#b9b9b9" stroke-width="0.8"/></svg><div class="t" style="left:167.60px;top:493.60px;font-size:13.7px;color:#3c3c3c;font-weight:normal;">Bocetos</div><div class="b" style="left:95px;top:517.6px;width:183.5px;height:24.5px;background:rgba(240,240,240,0.93)"></div><svg class="s" style="left:72.8px;top:522.7px;" width="10" height="14" viewBox="0 0 10 14"><path d="M1.2,1.2 L8.2,6.9 L1.2,12.6 Z" fill="#fff" stroke="#222" stroke-width="1.1" stroke-linejoin="miter"/></svg><svg class="s" style="left:99px;top:523.6px;" width="20" height="12" viewBox="0 0 20 12"><path d="M-0.2,6 Q10,-5.6 20.2,6 Q10,17.6 -0.2,6 Z" fill="#969696"/><circle cx="10" cy="6" r="3.6" fill="none" stroke="#fff" stroke-width="1.1"/><circle cx="10" cy="6" r="2.2" fill="#969696"/></svg><svg class="s" style="left:126px;top:516.0px;" width="26" height="24" viewBox="0 0 26 24"><path d="M7.2,15.5 V23.6 H19 L23.7,18.7 V7 H11.5" fill="#d9d9d9" stroke="#606060" stroke-width="1.2" stroke-linejoin="round"/><path d="M19,11.5 L23.2,7.5 V18.5 L19,23 Z" fill="#bcbcbc"/><path d="M12,11.5 H19 V22.8" stroke="#eee" stroke-width="0.6" fill="none"/><g stroke="#fff" stroke-width="2.6" fill="none" opacity="0.7"><circle cx="8.4" cy="5.600000000000001" r="1.5"/><path d="M8.4,7.200000000000001 V13.8"/><path d="M4.4,10.8 Q8.4,15.3 12.4,10.8"/></g><g stroke="#111" stroke-width="1.1" fill="none"><circle cx="8.4" cy="5.600000000000001" r="1.4"/><path d="M8.4,7.000000000000001 V14.0 M7.1000000000000005,9.200000000000001 H9.700000000000001"/><path d="M4.4,10.8 Q8.4,15.3 12.4,10.8"/></g><path d="M3.6000000000000005,10.0 L5.4,10.200000000000001 L4.4,11.8 Z M13.2,10.0 L11.4,10.200000000000001 L12.4,11.8 Z" fill="#111"/></svg><div class="t" style="left:167.60px;top:523.60px;font-size:13.7px;color:#3c3c3c;font-weight:normal;">Componente2:1</div><div class="b" style="left:95px;top:547.6px;width:183.5px;height:24.5px;background:rgba(240,240,240,0.93)"></div><svg class="s" style="left:72.8px;top:552.7px;" width="10" height="14" viewBox="0 0 10 14"><path d="M1.2,1.2 L8.2,6.9 L1.2,12.6 Z" fill="#fff" stroke="#222" stroke-width="1.1" stroke-linejoin="miter"/></svg><svg class="s" style="left:99px;top:553.6px;" width="20" height="12" viewBox="0 0 20 12"><path d="M-0.2,6 Q10,-5.6 20.2,6 Q10,17.6 -0.2,6 Z" fill="#969696"/><circle cx="10" cy="6" r="3.6" fill="none" stroke="#fff" stroke-width="1.1"/><circle cx="10" cy="6" r="2.2" fill="#969696"/></svg><svg class="s" style="left:131px;top:550.6px;" width="18" height="18" viewBox="0 0 18 18"><defs><linearGradient id="cg" x1="0" y1="0" x2="0" y2="1"><stop offset="0" stop-color="#e8ebef"/><stop offset="1" stop-color="#b9bfc8"/></linearGradient></defs><path d="M1.5,5 L5,1.5 H16 V13 L12.5,16.5 H1.5 Z" fill="url(#cg)" stroke="#555" stroke-width="1.1" stroke-linejoin="round"/><path d="M12.5,5 L16,1.5 V13 L12.5,16.5 Z" fill="#b0b6bf"/><path d="M1.5,5 H12.5 V16.5 M12.5,5 L16,1.5" fill="none" stroke="#666" stroke-width="0.8"/></svg><div class="t" style="left:167.60px;top:553.60px;font-size:13.7px;color:#3c3c3c;font-weight:normal;">Componente3:1</div><div class="b" style="left:95px;top:577.6px;width:183.5px;height:24.5px;background:rgba(240,240,240,0.93)"></div><svg class="s" style="left:72.8px;top:582.7px;" width="10" height="14" viewBox="0 0 10 14"><path d="M1.2,1.2 L8.2,6.9 L1.2,12.6 Z" fill="#fff" stroke="#222" stroke-width="1.1" stroke-linejoin="miter"/></svg><svg class="s" style="left:99px;top:583.6px;" width="20" height="12" viewBox="0 0 20 12"><path d="M-0.2,6 Q10,-5.6 20.2,6 Q10,17.6 -0.2,6 Z" fill="#969696"/><circle cx="10" cy="6" r="3.6" fill="none" stroke="#fff" stroke-width="1.1"/><circle cx="10" cy="6" r="2.2" fill="#969696"/></svg><svg class="s" style="left:131px;top:580.6px;" width="18" height="18" viewBox="0 0 18 18"><defs><linearGradient id="cg" x1="0" y1="0" x2="0" y2="1"><stop offset="0" stop-color="#e8ebef"/><stop offset="1" stop-color="#b9bfc8"/></linearGradient></defs><path d="M1.5,5 L5,1.5 H16 V13 L12.5,16.5 H1.5 Z" fill="url(#cg)" stroke="#555" stroke-width="1.1" stroke-linejoin="round"/><path d="M12.5,5 L16,1.5 V13 L12.5,16.5 Z" fill="#b0b6bf"/><path d="M1.5,5 H12.5 V16.5 M12.5,5 L16,1.5" fill="none" stroke="#666" stroke-width="0.8"/></svg><div class="t" style="left:167.60px;top:583.60px;font-size:13.7px;color:#3c3c3c;font-weight:normal;">Componente4:1</div><div class="b" style="left:95px;top:607.6px;width:183.5px;height:24.5px;background:rgba(240,240,240,0.93)"></div><svg class="s" style="left:72.8px;top:612.7px;" width="10" height="14" viewBox="0 0 10 14"><path d="M1.2,1.2 L8.2,6.9 L1.2,12.6 Z" fill="#fff" stroke="#222" stroke-width="1.1" stroke-linejoin="miter"/></svg><svg class="s" style="left:99px;top:613.6px;" width="20" height="12" viewBox="0 0 20 12"><path d="M-0.2,6 Q10,-5.6 20.2,6 Q10,17.6 -0.2,6 Z" fill="#969696"/><circle cx="10" cy="6" r="3.6" fill="none" stroke="#fff" stroke-width="1.1"/><circle cx="10" cy="6" r="2.2" fill="#969696"/></svg><svg class="s" style="left:131px;top:610.6px;" width="18" height="18" viewBox="0 0 18 18"><defs><linearGradient id="cg" x1="0" y1="0" x2="0" y2="1"><stop offset="0" stop-color="#e8ebef"/><stop offset="1" stop-color="#b9bfc8"/></linearGradient></defs><path d="M1.5,5 L5,1.5 H16 V13 L12.5,16.5 H1.5 Z" fill="url(#cg)" stroke="#555" stroke-width="1.1" stroke-linejoin="round"/><path d="M12.5,5 L16,1.5 V13 L12.5,16.5 Z" fill="#b0b6bf"/><path d="M1.5,5 H12.5 V16.5 M12.5,5 L16,1.5" fill="none" stroke="#666" stroke-width="0.8"/></svg><div class="t" style="left:167.60px;top:613.60px;font-size:13.7px;color:#3c3c3c;font-weight:normal;">Componente5:1</div><div class="b" style="left:95px;top:637.6px;width:183.5px;height:24.5px;background:rgba(240,240,240,0.93)"></div><svg class="s" style="left:72.8px;top:642.7px;" width="10" height="14" viewBox="0 0 10 14"><path d="M1.2,1.2 L8.2,6.9 L1.2,12.6 Z" fill="#fff" stroke="#222" stroke-width="1.1" stroke-linejoin="miter"/></svg><svg class="s" style="left:99px;top:643.6px;" width="20" height="12" viewBox="0 0 20 12"><path d="M-0.2,6 Q10,-5.6 20.2,6 Q10,17.6 -0.2,6 Z" fill="#969696"/><circle cx="10" cy="6" r="3.6" fill="none" stroke="#fff" stroke-width="1.1"/><circle cx="10" cy="6" r="2.2" fill="#969696"/></svg><svg class="s" style="left:131px;top:640.6px;" width="18" height="18" viewBox="0 0 18 18"><defs><linearGradient id="cg" x1="0" y1="0" x2="0" y2="1"><stop offset="0" stop-color="#e8ebef"/><stop offset="1" stop-color="#b9bfc8"/></linearGradient></defs><path d="M1.5,5 L5,1.5 H16 V13 L12.5,16.5 H1.5 Z" fill="url(#cg)" stroke="#555" stroke-width="1.1" stroke-linejoin="round"/><path d="M12.5,5 L16,1.5 V13 L12.5,16.5 Z" fill="#b0b6bf"/><path d="M1.5,5 H12.5 V16.5 M12.5,5 L16,1.5" fill="none" stroke="#666" stroke-width="0.8"/></svg><div class="t" style="left:167.60px;top:643.60px;font-size:13.7px;color:#3c3c3c;font-weight:normal;">Componente6:1</div><div class="b" style="left:95px;top:667.6px;width:183.5px;height:24.5px;background:rgba(240,240,240,0.93)"></div><svg class="s" style="left:72.8px;top:672.7px;" width="10" height="14" viewBox="0 0 10 14"><path d="M1.2,1.2 L8.2,6.9 L1.2,12.6 Z" fill="#fff" stroke="#222" stroke-width="1.1" stroke-linejoin="miter"/></svg><svg class="s" style="left:99px;top:673.6px;" width="20" height="12" viewBox="0 0 20 12"><path d="M-0.2,6 Q10,-5.6 20.2,6 Q10,17.6 -0.2,6 Z" fill="#969696"/><circle cx="10" cy="6" r="3.6" fill="none" stroke="#fff" stroke-width="1.1"/><circle cx="10" cy="6" r="2.2" fill="#969696"/></svg><svg class="s" style="left:131px;top:670.6px;" width="18" height="18" viewBox="0 0 18 18"><defs><linearGradient id="cg" x1="0" y1="0" x2="0" y2="1"><stop offset="0" stop-color="#e8ebef"/><stop offset="1" stop-color="#b9bfc8"/></linearGradient></defs><path d="M1.5,5 L5,1.5 H16 V13 L12.5,16.5 H1.5 Z" fill="url(#cg)" stroke="#555" stroke-width="1.1" stroke-linejoin="round"/><path d="M12.5,5 L16,1.5 V13 L12.5,16.5 Z" fill="#b0b6bf"/><path d="M1.5,5 H12.5 V16.5 M12.5,5 L16,1.5" fill="none" stroke="#666" stroke-width="0.8"/></svg><div class="t" style="left:167.60px;top:673.60px;font-size:13.7px;color:#3c3c3c;font-weight:normal;">Componente7:1</div>
<div class="b" style="left:5px;top:1041px;width:374px;height:31px;background:#f1f1f1;border:1px solid #c8c8c8;border-bottom:2px solid #c4c4c4"></div>
<div class="t" style="left:36.00px;top:1049.49px;font-size:13.6px;color:#555;font-weight:normal;">COMENTARIOS</div>
<svg class="s" style="left:352px;top:1049px;" width="15" height="15" viewBox="0 0 15 15"><circle cx="7.3" cy="7.3" r="6" fill="#222"/><rect x="3.8" y="6.4" width="7" height="1.8" fill="#fff"/><rect x="6.4" y="3.8" width="1.8" height="7" fill="#fff"/></svg>
<div class="b" style="left:1444px;top:1019px;width:151px;height:27px;background:rgba(240,240,240,0.93)"></div>
<div class="t" style="left:1447.00px;top:1025.19px;font-size:13.6px;color:#333;font-weight:normal;">Envolvente1(Cant.: 1):1</div>
<div class="t" style="right:44.50px;top:1052.29px;text-align:right;font-size:13.6px;color:#2a2a2a;font-weight:bold;">Organizar1:1</div>
<svg class="s" style="left:1885px;top:1049px;" width="20" height="20" viewBox="0 0 20 20"><path d="M9.6,0.6 A8.9,8.9 0 1 0 18.5,9.5 V18.4 H9.6 Z" fill="#000"/><path d="M9.6,0.6 A8.9,8.9 0 0 1 18.5,9.5 V18.4 H9.6 Z" fill="#000"/><path d="M2.8,10.6 L14.4,4.2 M3.6,12.8 L15.4,6.6 M6.2,14 L15.6,9 M13.6,12.8 L15,12" stroke="#fff" stroke-width="0.95"/></svg>
<div class="b" style="left:813px;top:1040px;width:296px;height:30px;background:rgba(240,240,240,0.95)"></div><svg class="s" style="left:0px;top:0px;" width="1912" height="1141" viewBox="0 0 1912 1141"><path d="M826,1047 L829.5,1043 L833,1047 H831 V1063 H828 V1047 Z" fill="#f4f4f4" stroke="#555" stroke-width="1"/><path d="M832,1053 Q838,1055 836,1058 Q832,1061 824,1059 Q817,1057 822,1053" fill="none" stroke="#555" stroke-width="1.2"/><path d="M842,1053 h8 l-4,5 z" fill="#222"/><rect x="859" y="1049" width="17" height="13" rx="1" fill="#f6f6f6" stroke="#777" stroke-width="1"/><rect x="861.5" y="1053" width="12" height="6" fill="#6e7a88"/><path d="M860,1049 L863,1045 H870 L868,1047" fill="none" stroke="#777" stroke-width="1"/><path d="M892,1058 L890,1052 Q890,1050 892,1051 L894,1054 V1046 Q895,1044 896,1046 V1053 V1044 Q897,1042 898.5,1044 V1053 V1045 Q900,1043 901,1045 V1053 V1047 Q902.5,1045 903.5,1047 V1057 Q903,1063 898,1063 Q894,1063 892,1058 Z" fill="#fff" stroke="#555" stroke-width="1"/><circle cx="930" cy="1053" r="6.5" fill="#e8f2f2" stroke="#555" stroke-width="1.4"/><line x1="934.5" y1="1057.5" x2="941" y2="1063.5" stroke="#333" stroke-width="2.4"/><path d="M937,1046 h5 M939.5,1043.5 v5" stroke="#444" stroke-width="1"/><rect x="955" y="1046" width="19" height="19" fill="none" stroke="#aaa" stroke-width="0.8" stroke-dasharray="2,1.5"/><circle cx="963" cy="1053" r="6.5" fill="#e8f2f2" stroke="#555" stroke-width="1.4"/><line x1="967.5" y1="1057.5" x2="974" y2="1063.5" stroke="#333" stroke-width="2.4"/><path d="M980,1053 h8 l-4,5 z" fill="#222"/><rect x="997" y="1046" width="18" height="14" fill="#8fb3e6" stroke="#555" stroke-width="1.4"/><path d="M1003,1061 h6 v2 h3 v1 h-12 v-1 h3 z" fill="#777"/><path d="M1018,1053 h8 l-4,5 z" fill="#222"/><rect x="1035" y="1046" width="18" height="18" fill="#d8dbe0" stroke="#555" stroke-width="1"/><line x1="1038.6" y1="1046" x2="1038.6" y2="1064" stroke="#666" stroke-width="0.6"/><line x1="1042.2" y1="1046" x2="1042.2" y2="1064" stroke="#666" stroke-width="0.6"/><line x1="1045.8" y1="1046" x2="1045.8" y2="1064" stroke="#666" stroke-width="0.6"/><line x1="1049.4" y1="1046" x2="1049.4" y2="1064" stroke="#666" stroke-width="0.6"/><line x1="1035" y1="1049.6" x2="1053" y2="1049.6" stroke="#666" stroke-width="0.6"/><line x1="1035" y1="1053.2" x2="1053" y2="1053.2" stroke="#666" stroke-width="0.6"/><line x1="1035" y1="1056.8" x2="1053" y2="1056.8" stroke="#666" stroke-width="0.6"/><line x1="1035" y1="1060.4" x2="1053" y2="1060.4" stroke="#666" stroke-width="0.6"/><path d="M1058,1053 h8 l-4,5 z" fill="#222"/><rect x="1074" y="1047" width="18" height="16" fill="#6c9ad8" stroke="#2e5ea8" stroke-width="1.2"/><path d="M1083,1047 V1063 M1074,1055 H1092" stroke="#c8dcf4" stroke-width="1"/><path d="M1096,1053 h8 l-4,5 z" fill="#222"/></svg>
<div class="b" style="left:0px;top:1078px;width:1912px;height:62px;background:#f2f2f2"></div>
<div class="b" style="left:0px;top:1139px;width:1912px;height:2px;background:#2a2a2a"></div>
<svg class="s" style="left:0px;top:0px;" width="1912" height="1141" viewBox="0 0 1912 1141"><rect x="13.3" y="1101.4" width="2.5" height="14.7" fill="#666"/><path d="M16.4,1108.8 L27.1,1101.9 V1115.7 Z" fill="#666"/><path d="M44.9,1108.8 L56.9,1101.4 V1116.1 Z" fill="#666"/><rect x="58.2" y="1106.3" width="2.5" height="6.3" fill="#666"/><path d="M76.3,1099.2 L91.1,1108.3 L76.3,1117.4 Z" fill="#666"/><rect x="106.2" y="1106.3" width="2.5" height="6.3" fill="#666"/><path d="M110.2,1101.4 L122.2,1108.8 L110.2,1116.1 Z" fill="#666"/><path d="M138.2,1101.9 L149.8,1108.8 L138.2,1115.7 Z" fill="#666"/><rect x="149.8" y="1101" width="2.5" height="15.1" fill="#666"/><rect x="184" y="1127.9" width="350" height="2" fill="#c8c8c8"/><rect x="192.7" y="1122.1" width="2.4" height="6" fill="#c8c8c8"/><rect x="221.4" y="1122.1" width="2.4" height="6" fill="#c8c8c8"/><rect x="251.2" y="1122.1" width="2.4" height="6" fill="#c8c8c8"/><rect x="281.1" y="1122.1" width="2.4" height="6" fill="#c8c8c8"/><rect x="311.1" y="1122.1" width="2.4" height="6" fill="#c8c8c8"/><rect x="341.2" y="1122.1" width="2.4" height="6" fill="#c8c8c8"/><rect x="371.3" y="1122.1" width="2.4" height="6" fill="#c8c8c8"/><rect x="401.2" y="1122.1" width="2.4" height="6" fill="#c8c8c8"/><rect x="431.2" y="1122.1" width="2.4" height="6" fill="#c8c8c8"/><rect x="461.2" y="1122.1" width="2.4" height="6" fill="#c8c8c8"/><rect x="491.1" y="1122.1" width="2.4" height="6" fill="#c8c8c8"/><rect x="521.2" y="1122.1" width="2.4" height="6" fill="#c8c8c8"/><rect x="183.40" y="1098.9" width="17.4" height="16.9" fill="none" stroke="#b4b4b4" stroke-width="0.9"/><path d="M187.90,1103.4 H196.00 M187.90,1103.4 V1111.3" stroke="#888" stroke-width="0.7" fill="none"/><path d="M189.00,1111 Q195.50,1110 196.00,1104.5" stroke="#555" stroke-width="0.7" fill="none"/><circle cx="183.40" cy="1098.9" r="0.95" fill="#1e88e5"/><circle cx="200.80" cy="1098.9" r="0.95" fill="#1e88e5"/><circle cx="183.40" cy="1115.8" r="0.95" fill="#1e88e5"/><circle cx="187.90" cy="1103.4" r="0.95" fill="#1e88e5"/><circle cx="196.00" cy="1103.4" r="0.95" fill="#1e88e5"/><circle cx="187.90" cy="1111.3" r="0.95" fill="#1e88e5"/><path d="M194.30,1117.6 L195.60,1113.8 L200.60,1108.6 L202.60,1110.6 L197.60,1115.8 Z" fill="#f5b84a"/><path d="M200.60,1108.6 L201.60,1107.6 Q202.40,1107 203.20,1107.8 L203.40,1108 Q204.00,1108.8 203.30,1109.6 L202.60,1110.6 Z" fill="#ee3a3a"/><path d="M194.30,1117.6 L194.90,1115.9 L196.00,1117 Z" fill="#333"/><path d="M213.70,1101.9 H225.20 V1114.8 H213.70 Z" fill="#67ace6"/><path d="M213.70,1101.9 L217.70,1097.9 H228.70 L225.20,1101.9 Z" fill="#8ecbf8"/><path d="M225.20,1101.9 L228.70,1097.9 V1111.3 L225.20,1114.8 Z" fill="#4490cc"/><path d="M213.70,1115.8 H225.20 L228.70,1112.3 V1114 L225.20,1117.8 H213.70 Z" fill="#b8b8b8"/><path d="M230.60,1114 V1100.5" stroke="#333" stroke-width="0.9"/><path d="M229.30,1101.2 L230.60,1098.6 L231.90,1101.2 Z" fill="#333"/><circle cx="252" cy="1100.4" r="2.05" fill="#62ace8"/><circle cx="257.5" cy="1103.9" r="2.05" fill="#62ace8"/><circle cx="257.5" cy="1110.3" r="2.05" fill="#62ace8"/><circle cx="252" cy="1114.3" r="2.05" fill="#62ace8"/><circle cx="246.3" cy="1110.3" r="2.05" fill="#62ace8"/><ellipse cx="246.3" cy="1103.9" rx="1.7" ry="2" fill="none" stroke="#999" stroke-width="0.8"/><rect x="273.40" y="1098.9" width="17.4" height="16.9" fill="none" stroke="#b4b4b4" stroke-width="0.9"/><path d="M277.90,1103.4 H286.00 M277.90,1103.4 V1111.3" stroke="#888" stroke-width="0.7" fill="none"/><path d="M279.00,1111 Q285.50,1110 286.00,1104.5" stroke="#555" stroke-width="0.7" fill="none"/><circle cx="273.40" cy="1098.9" r="0.95" fill="#1e88e5"/><circle cx="290.80" cy="1098.9" r="0.95" fill="#1e88e5"/><circle cx="273.40" cy="1115.8" r="0.95" fill="#1e88e5"/><circle cx="277.90" cy="1103.4" r="0.95" fill="#1e88e5"/><circle cx="286.00" cy="1103.4" r="0.95" fill="#1e88e5"/><circle cx="277.90" cy="1111.3" r="0.95" fill="#1e88e5"/><path d="M284.30,1117.6 L285.60,1113.8 L290.60,1108.6 L292.60,1110.6 L287.60,1115.8 Z" fill="#f5b84a"/><path d="M290.60,1108.6 L291.60,1107.6 Q292.40,1107 293.20,1107.8 L293.40,1108 Q294.00,1108.8 293.30,1109.6 L292.60,1110.6 Z" fill="#ee3a3a"/><path d="M284.30,1117.6 L284.90,1115.9 L286.00,1117 Z" fill="#333"/><path d="M303.70,1101.9 H315.20 V1114.8 H303.70 Z" fill="#67ace6"/><path d="M303.70,1101.9 L307.70,1097.9 H318.70 L315.20,1101.9 Z" fill="#8ecbf8"/><path d="M315.20,1101.9 L318.70,1097.9 V1111.3 L315.20,1114.8 Z" fill="#4490cc"/><path d="M303.70,1115.8 H315.20 L318.70,1112.3 V1114 L315.20,1117.8 H303.70 Z" fill="#b8b8b8"/><path d="M320.60,1114 V1100.5" stroke="#333" stroke-width="0.9"/><path d="M319.30,1101.2 L320.60,1098.6 L321.90,1101.2 Z" fill="#333"/><path d="M341.5,1098.9 L333.6,1116.8 H341.5 Z" fill="#f4f4f4" stroke="#888" stroke-width="0.8" stroke-linejoin="round"/><rect x="341.2" y="1098.9" width="1" height="18" fill="#bbb"/><path d="M342.2,1098.9 L350.9,1116.8 H342.2 Z" fill="#62ace8"/><path d="M363.40,1099.9 Q368.00,1097.4 372.60,1099.9 V1105.7 Q368.00,1108.3 363.40,1105.7 Z" fill="#d8d8d8" stroke="#555" stroke-width="0.9"/><path d="M363.40,1099.9 Q368.00,1102.2 372.60,1099.9" fill="none" stroke="#777" stroke-width="0.6"/><path d="M364.40,1111.7 V1114.2 H369.00" fill="none" stroke="#222" stroke-width="0.9"/><path d="M368.50,1112.2 L370.80,1114.2 L368.50,1116.2 Z" fill="#222"/><path d="M373.00,1110.8 L375.60,1108.2 H383.00 V1115.4 L380.40,1118 H373.00 Z" fill="#62ace8"/><path d="M380.40,1110.8 L383.00,1108.2 V1115.4 L380.40,1118 Z" fill="#3f8fd0"/><path d="M373.00,1110.8 L375.60,1108.2 H383.00 L380.40,1110.8 Z" fill="#8ecbf8"/><path d="M393.40,1099.9 Q398.00,1097.4 402.60,1099.9 V1105.7 Q398.00,1108.3 393.40,1105.7 Z" fill="#d8d8d8" stroke="#555" stroke-width="0.9"/><path d="M393.40,1099.9 Q398.00,1102.2 402.60,1099.9" fill="none" stroke="#777" stroke-width="0.6"/><path d="M394.40,1111.7 V1114.2 H399.00" fill="none" stroke="#222" stroke-width="0.9"/><path d="M398.50,1112.2 L400.80,1114.2 L398.50,1116.2 Z" fill="#222"/><path d="M403.00,1110.8 L405.60,1108.2 H413.00 V1115.4 L410.40,1118 H403.00 Z" fill="#62ace8"/><path d="M410.40,1110.8 L413.00,1108.2 V1115.4 L410.40,1118 Z" fill="#3f8fd0"/><path d="M403.00,1110.8 L405.60,1108.2 H413.00 L410.40,1110.8 Z" fill="#8ecbf8"/><path d="M423.40,1099.9 Q428.00,1097.4 432.60,1099.9 V1105.7 Q428.00,1108.3 423.40,1105.7 Z" fill="#d8d8d8" stroke="#555" stroke-width="0.9"/><path d="M423.40,1099.9 Q428.00,1102.2 432.60,1099.9" fill="none" stroke="#777" stroke-width="0.6"/><path d="M424.40,1111.7 V1114.2 H429.00" fill="none" stroke="#222" stroke-width="0.9"/><path d="M428.50,1112.2 L430.80,1114.2 L428.50,1116.2 Z" fill="#222"/><path d="M433.00,1110.8 L435.60,1108.2 H443.00 V1115.4 L440.40,1118 H433.00 Z" fill="#62ace8"/><path d="M440.40,1110.8 L443.00,1108.2 V1115.4 L440.40,1118 Z" fill="#3f8fd0"/><path d="M433.00,1110.8 L435.60,1108.2 H443.00 L440.40,1110.8 Z" fill="#8ecbf8"/><path d="M453.40,1099.9 Q458.00,1097.4 462.60,1099.9 V1105.7 Q458.00,1108.3 453.40,1105.7 Z" fill="#d8d8d8" stroke="#555" stroke-width="0.9"/><path d="M453.40,1099.9 Q458.00,1102.2 462.60,1099.9" fill="none" stroke="#777" stroke-width="0.6"/><path d="M454.40,1111.7 V1114.2 H459.00" fill="none" stroke="#222" stroke-width="0.9"/><path d="M458.50,1112.2 L460.80,1114.2 L458.50,1116.2 Z" fill="#222"/><path d="M463.00,1110.8 L465.60,1108.2 H473.00 V1115.4 L470.40,1118 H463.00 Z" fill="#62ace8"/><path d="M470.40,1110.8 L473.00,1108.2 V1115.4 L470.40,1118 Z" fill="#3f8fd0"/><path d="M463.00,1110.8 L465.60,1108.2 H473.00 L470.40,1110.8 Z" fill="#8ecbf8"/><path d="M483.40,1099.9 Q488.00,1097.4 492.60,1099.9 V1105.7 Q488.00,1108.3 483.40,1105.7 Z" fill="#d8d8d8" stroke="#555" stroke-width="0.9"/><path d="M483.40,1099.9 Q488.00,1102.2 492.60,1099.9" fill="none" stroke="#777" stroke-width="0.6"/><path d="M484.40,1111.7 V1114.2 H489.00" fill="none" stroke="#222" stroke-width="0.9"/><path d="M488.50,1112.2 L490.80,1114.2 L488.50,1116.2 Z" fill="#222"/><path d="M493.00,1110.8 L495.60,1108.2 H503.00 V1115.4 L500.40,1118 H493.00 Z" fill="#62ace8"/><path d="M500.40,1110.8 L503.00,1108.2 V1115.4 L500.40,1118 Z" fill="#3f8fd0"/><path d="M493.00,1110.8 L495.60,1108.2 H503.00 L500.40,1110.8 Z" fill="#8ecbf8"/><path d="M513.40,1099.9 Q518.00,1097.4 522.60,1099.9 V1105.7 Q518.00,1108.3 513.40,1105.7 Z" fill="#d8d8d8" stroke="#555" stroke-width="0.9"/><path d="M513.40,1099.9 Q518.00,1102.2 522.60,1099.9" fill="none" stroke="#777" stroke-width="0.6"/><path d="M514.40,1111.7 V1114.2 H519.00" fill="none" stroke="#222" stroke-width="0.9"/><path d="M518.50,1112.2 L520.80,1114.2 L518.50,1116.2 Z" fill="#222"/><path d="M523.00,1110.8 L525.60,1108.2 H533.00 V1115.4 L530.40,1118 H523.00 Z" fill="#62ace8"/><path d="M530.40,1110.8 L533.00,1108.2 V1115.4 L530.40,1118 Z" fill="#3f8fd0"/><path d="M523.00,1110.8 L525.60,1108.2 H533.00 L530.40,1110.8 Z" fill="#8ecbf8"/><path d="M530.2,1089.7 H544.9 V1094.5 L540.5,1099 L539.2,1100.8 V1130 H536.1 V1100.8 L534.6,1099 L530.2,1094.5 Z" fill="#666"/><g transform="translate(1893.5,1108)"><circle r="6.5" fill="#777"/><rect x="-2" y="-10" width="4" height="5" fill="#777" transform="rotate(0)"/><rect x="-2" y="-10" width="4" height="5" fill="#777" transform="rotate(45)"/><rect x="-2" y="-10" width="4" height="5" fill="#777" transform="rotate(90)"/><rect x="-2" y="-10" width="4" height="5" fill="#777" transform="rotate(135)"/><rect x="-2" y="-10" width="4" height="5" fill="#777" transform="rotate(180)"/><rect x="-2" y="-10" width="4" height="5" fill="#777" transform="rotate(225)"/><rect x="-2" y="-10" width="4" height="5" fill="#777" transform="rotate(270)"/><rect x="-2" y="-10" width="4" height="5" fill="#777" transform="rotate(315)"/><circle r="2.8" fill="#f2f2f2"/></g></svg>
<div class="b" style="left:0px;top:0px;width:1912px;height:29px;background:#fcf9ef"></div>
<svg class="s" style="left:2px;top:3px;" width="20" height="22" viewBox="0 0 20 22"><defs><linearGradient id="fo" x1="0" y1="0" x2="0" y2="1"><stop offset="0" stop-color="#ff8a2a"/><stop offset="1" stop-color="#f06010"/></linearGradient></defs><path d="M2.5,3 Q2.5,1 4.5,1 H17 Q19,1 19,3 V20 Q19,21 18,21 H4.5 Q3,21 2.5,19.5 Z" fill="url(#fo)"/><rect x="3.5" y="15" width="15.5" height="6" fill="#a8451a"/><path d="M8,4 H14.5 V6.3 H10.5 V8.5 H14 V10.7 H10.5 V14 H8 Z" fill="#fff"/><text x="11" y="20" font-size="4" font-family="Liberation Sans" font-weight="bold" fill="#e9b89a" text-anchor="middle">FUS</text></svg>
<div class="t" style="left:29.40px;top:7.33px;font-size:15.2px;color:#1a1a1a;font-weight:normal;letter-spacing:-0.23px">cubo Joaquín* - Autodesk Fusion (Licencia educativa)</div>
<svg class="s" style="left:0px;top:0px;" width="1912" height="29" viewBox="0 0 1912 29"><rect x="1764.5" y="13.3" width="12.5" height="1" fill="#222"/><rect x="1823" y="11.5" width="9" height="8.5" rx="1.3" fill="none" stroke="#222" stroke-width="1"/><path d="M1825.5,11.5 V10.5 Q1825.5,9 1827,9 H1833 Q1834.5,9 1834.5,10.5 V16.5 Q1834.5,18 1833,18 H1832" fill="none" stroke="#222" stroke-width="1"/><path d="M1881.5,8.5 L1893.5,20.5 M1893.5,8.5 L1881.5,20.5" stroke="#222" stroke-width="1.1"/></svg>
<div class="b" style="left:0px;top:29px;width:1912px;height:40px;background:#cbcbcb"></div>
<div class="b" style="left:243px;top:34px;width:48px;height:35px;background:#bdbdbd;border-radius:5px 5px 0 0"></div>
<div class="b" style="left:296.5px;top:33.5px;width:673.5px;height:35.5px;background:#bcbcbc;border-radius:5px 5px 0 0"></div>
<div class="b" style="left:975px;top:34px;width:674px;height:35px;background:#f2f2f2;border-radius:5px 5px 0 0"></div>
<div class="b" style="left:1654px;top:34px;width:35px;height:35px;background:#bdbdbd;border-radius:5px 5px 0 0"></div>
<div class="b" style="left:1873px;top:33.5px;width:31.5px;height:31.5px;background:#efefef;border-radius:50%"></div>
<svg class="s" style="left:0px;top:0px;" width="1912" height="69" viewBox="0 0 1912 69"><rect x="11.0" y="40.0" width="5" height="5" rx="0.8" fill="#606060"/><rect x="11.0" y="46.2" width="5" height="5" rx="0.8" fill="#606060"/><rect x="11.0" y="52.4" width="5" height="5" rx="0.8" fill="#606060"/><rect x="17.2" y="40.0" width="5" height="5" rx="0.8" fill="#606060"/><rect x="17.2" y="46.2" width="5" height="5" rx="0.8" fill="#606060"/><rect x="17.2" y="52.4" width="5" height="5" rx="0.8" fill="#606060"/><rect x="23.4" y="40.0" width="5" height="5" rx="0.8" fill="#606060"/><rect x="23.4" y="46.2" width="5" height="5" rx="0.8" fill="#606060"/><rect x="23.4" y="52.4" width="5" height="5" rx="0.8" fill="#606060"/><path d="M53,41 H64 L69,46 V58 Q69,59 68,59 H54 Q53,59 53,58 Z" fill="#606060"/><path d="M64,40.5 V46 H69.5" fill="#cbcbcb" stroke="#cbcbcb" stroke-width="0.6"/><path d="M64.5,41 L69,45.5 H64.5 Z" fill="#606060"/><path d="M76.5,48 h8.3 l-4.15,5 z" fill="#606060"/><path d="M109,41 Q109,40 110,40 H123.5 L126,42.5 V57 Q126,58 125,58 H111.5 L109,55.5 Z" fill="#606060"/><rect x="113.2" y="41.8" width="9.2" height="5.8" rx="0.6" fill="#cbcbcb"/><rect x="112.8" y="50.6" width="9.8" height="7.4" rx="0.6" fill="#cbcbcb"/><rect x="115.8" y="52.3" width="3.8" height="5.7" fill="#606060"/><path d="M155,43 L152,49 L158.5,51.5" fill="none" stroke="#606060" stroke-width="2.4" stroke-linejoin="round" stroke-linecap="round"/><path d="M153,49 Q161,43 166,57" fill="none" stroke="#606060" stroke-width="2.4" stroke-linecap="round"/><path d="M175,48 h8.3 l-4.15,5 z" fill="#606060"/><path d="M210,43 L213.5,48.5 L207,51" fill="none" stroke="#9a9a9a" stroke-width="2.4" stroke-linejoin="round" stroke-linecap="round"/><path d="M212.5,48.5 Q204,43 199.5,57" fill="none" stroke="#9a9a9a" stroke-width="2.4" stroke-linecap="round"/><path d="M224,48 h8.3 l-4.15,5 z" fill="#9a9a9a"/><path d="M259,54 L267,46.5 L275,54 H272.5 V61.5 H268.5 V57 H265.5 V61.5 H261.5 V54 Z" fill="#606060"/><rect x="271" y="47" width="2.5" height="5" fill="#606060"/><g transform="translate(577.5,43.5) scale(1.0)"><path d="M9,0.5 L17.5,4.5 V14 L9,18.5 L0.5,14 V4.5 Z" fill="#ff8c2a"/><path d="M0.5,4.5 L9,9 L17.5,4.5 L9,0.5 Z" fill="#ffb066"/><path d="M9,9 V18.5 L17.5,14 V4.5 Z" fill="#f06a10"/></g><path d="M951,47 L961,57 M961,47 L951,57" stroke="#6a6a6a" stroke-width="1.5"/><g transform="translate(1244.5,43) scale(1.0)"><path d="M9,0.5 L17.5,4.5 V14 L9,18.5 L0.5,14 V4.5 Z" fill="#ff8c2a"/><path d="M0.5,4.5 L9,9 L17.5,4.5 L9,0.5 Z" fill="#ffb066"/><path d="M9,9 V18.5 L17.5,14 V4.5 Z" fill="#f06a10"/></g><path d="M1629.5,46.5 L1640.5,57 M1640.5,46.5 L1629.5,57" stroke="#6a6a6a" stroke-width="1.5"/><rect x="1664" y="49.6" width="16" height="3" fill="#7a7a7a"/><rect x="1670.5" y="43" width="3" height="16" fill="#7a7a7a"/><circle cx="1713.4" cy="48.7" r="9.6" fill="#606060"/><g transform="translate(1713.4,48.7) rotate(-45)" fill="#cbcbcb"><path d="M-5.5,-4.6 H1.6 V4.6 H-5.5 Q-7.2,4.6 -7.2,2.6 V-2.6 Q-7.2,-4.6 -5.5,-4.6 Z"/><rect x="1.2" y="-3.1" width="4.6" height="1.4"/><rect x="1.2" y="1.7" width="4.6" height="1.4"/><rect x="-10.5" y="-1.2" width="4" height="2.4"/></g><circle cx="1754.8" cy="48.7" r="9.4" fill="none" stroke="#606060" stroke-width="1.1"/><circle cx="1754.8" cy="48.7" r="7.1" fill="#606060"/><path d="M1754.6,43.9 V49.7 H1760" fill="none" stroke="#d8d8d8" stroke-width="1.3"/><path d="M1788,55 Q1791,53 1791,48 Q1791,42 1796,41 V39.5 H1796.5 Q1801,42 1801,48 Q1801,53 1804,55 Z" fill="#606060"/><path d="M1793.5,56 Q1796,60 1798.5,56 Z" fill="#606060"/><circle cx="1837.5" cy="49" r="10" fill="#606060"/><path d="M1833.5,46 Q1833.5,41.5 1837.5,41.5 Q1841.5,41.5 1841.5,45.5 Q1841.5,48 1838.5,49.5 V51.5" fill="none" stroke="#cbcbcb" stroke-width="2.6"/><rect x="1836.2" y="53.5" width="2.8" height="2.8" fill="#cbcbcb"/></svg>
<div class="t" style="left:601.20px;top:45.40px;font-size:15px;color:#666;font-weight:normal;">laser cut 1*</div>
<div class="t" style="left:1269.70px;top:45.40px;font-size:15px;color:#222;font-weight:normal;">cubo Joaquín*</div>
<div class="t" style="left:1588.00px;top:43.30px;width:600px;text-align:center;font-size:13px;color:#333;font-weight:normal;letter-spacing:-0.4px">CR</div>
<div class="b" style="left:0px;top:69px;width:1912px;height:102px;background:#f2f2f2"></div>
<div class="b" style="left:0px;top:171px;width:1912px;height:1px;background:#cdcdcd"></div>
<div class="b" style="left:0px;top:172px;width:1912px;height:3px;background:#efefef"></div>
<div class="b" style="left:15px;top:82.3px;width:137px;height:75.6px;background:#f2f2f2;border:1px solid #c9c9c9;border-radius:5px"></div>
<div class="t" style="left:51.00px;top:112.99px;font-size:13.6px;color:#333;font-weight:bold;">DISEÑO</div>
<div class="t" style="left:188.90px;top:77.06px;font-size:13.4px;color:#0a8fd0;font-weight:bold;">SOLIDO</div>
<div class="t" style="left:297.70px;top:76.89px;font-size:13.6px;color:#3c3c3c;font-weight:normal;">SUPERFICIE</div>
<div class="t" style="left:438.90px;top:76.89px;font-size:13.6px;color:#3c3c3c;font-weight:normal;">MALLA</div>
<div class="t" style="left:542.80px;top:76.89px;font-size:13.6px;color:#3c3c3c;font-weight:normal;">CHAPA</div>
<div class="t" style="left:646.40px;top:76.89px;font-size:13.6px;color:#3c3c3c;font-weight:normal;">PLÁSTICO</div>
<div class="t" style="left:775.00px;top:76.89px;font-size:13.6px;color:#3c3c3c;font-weight:normal;">ADMINISTRAR</div>
<div class="t" style="left:929.30px;top:76.89px;font-size:13.6px;color:#3c3c3c;font-weight:normal;">UTILIDADES</div>
<div class="b" style="left:173px;top:94.7px;width:84px;height:3.2px;background:#0696d7"></div>
<div class="t" style="left:321.00px;top:151.69px;font-size:13.6px;color:#3c3c3c;font-weight:normal;">CREAR</div>
<div class="t" style="left:668.60px;top:151.69px;font-size:13.6px;color:#3c3c3c;font-weight:normal;">MODIFICAR</div>
<div class="t" style="left:947.60px;top:151.69px;font-size:13.6px;color:#3c3c3c;font-weight:normal;">ENSAMBLAR</div>
<div class="t" style="left:1129.40px;top:151.69px;font-size:13.6px;color:#3c3c3c;font-weight:normal;">CONFIGURAR</div>
<div class="t" style="left:1266.00px;top:151.69px;font-size:13.6px;color:#3c3c3c;font-weight:normal;">CONSTRUIR</div>
<div class="t" style="left:1396.30px;top:151.69px;font-size:13.6px;color:#3c3c3c;font-weight:normal;">INSPECCIONAR</div>
<div class="t" style="left:1546.90px;top:151.69px;font-size:13.6px;color:#3c3c3c;font-weight:normal;">INSERTAR</div>
<div class="t" style="left:1665.80px;top:151.69px;font-size:13.6px;color:#3c3c3c;font-weight:normal;">SELECCIONAR</div>
<div class="t" style="left:1810.60px;top:151.69px;font-size:13.6px;color:#3c3c3c;font-weight:normal;">POSICIÓN</div>
<svg class="s" style="left:0px;top:0px;" width="1912" height="1141" viewBox="0 0 1912 1141"><path d="M373,156 h7 l-3.5,4.5 z" fill="#333"/><path d="M750,156 h7 l-3.5,4.5 z" fill="#333"/><path d="M1035,156 h7 l-3.5,4.5 z" fill="#333"/><path d="M1224.8,156 h7 l-3.5,4.5 z" fill="#333"/><path d="M1351,156 h7 l-3.5,4.5 z" fill="#333"/><path d="M1504,156 h7 l-3.5,4.5 z" fill="#333"/><path d="M1618.7,156 h7 l-3.5,4.5 z" fill="#333"/><path d="M1768.5,156 h7 l-3.5,4.5 z" fill="#333"/><path d="M1880.4,156 h7 l-3.5,4.5 z" fill="#333"/><path d="M111.3,118 h7 l-3.5,4.5 z" fill="#333"/><rect x="546" y="102" width="1" height="64" fill="#d2d2d2"/><rect x="882" y="102" width="1" height="64" fill="#d2d2d2"/><rect x="1111" y="102" width="1" height="64" fill="#d2d2d2"/><rect x="1247" y="102" width="1" height="64" fill="#d2d2d2"/><rect x="1377" y="102" width="1" height="64" fill="#d2d2d2"/><rect x="1526" y="102" width="1" height="64" fill="#d2d2d2"/><rect x="1647" y="102" width="1" height="64" fill="#d2d2d2"/><rect x="1789" y="102" width="1" height="64" fill="#d2d2d2"/><rect x="171.06" y="102.74" width="3.8" height="3.8" fill="#555"/><rect x="205.00" y="102.74" width="3.8" height="3.8" fill="#555"/><rect x="171.06" y="136.36" width="3.8" height="3.8" fill="#555"/><rect x="180.00" y="111.30" width="3.8" height="3.8" fill="#555"/><rect x="196.20" y="111.30" width="3.8" height="3.8" fill="#555"/><rect x="180.00" y="127.90" width="3.8" height="3.8" fill="#555"/><g stroke="#5c5c5c" stroke-width="1.05" fill="none"><path d="M176.3,104.64 H203.8 M172.96,108 V134.7 M206.9,108 V124.7 M176.3,138.26 H193.7"/><path d="M185.3,113.2 H194.8 M181.9,116.5 V126.3"/><path d="M185.3,129.6 Q196.5,127 198.6,116.8"/></g><rect x="200" y="125.2" width="4.9" height="17.7" fill="#22b04a"/><rect x="194" y="131.5" width="17" height="4.9" fill="#22b04a"/><path d="M226.1,110.2 H249 V136.1 H226.1 Z" fill="#67ace6"/><path d="M226.1,110.2 L233.5,103 H255.8 L249,110.2 Z" fill="#8ecbf8"/><path d="M249,110.2 L255.8,103 V128.7 L249,136.1 Z" fill="#4490cc"/><path d="M226.1,138.3 H249 V142.9 H226.1 Z" fill="#b0b0b0"/><path d="M249,138.3 L255.8,130.9 V135.5 L249,142.9 Z" fill="#a2a2a2"/><path d="M260.6,108 V135" stroke="#333" stroke-width="1.2"/><path d="M258,108.8 L260.6,103.7 L263.3,108.8 Z" fill="#333"/><path d="M315.9,112.1 Q298.2,100 281.5,111.2" fill="none" stroke="#333" stroke-width="0.9"/><path d="M279.2,113.2 L282.3,107.9 L285.4,111.6 Z" fill="#333"/><path d="M278.8,119.7 Q298.2,104.5 318.3,119.3 L309.8,125.8 Q298.2,117.6 286.1,125.8 Z" fill="#8ecbf8"/><path d="M286.1,125.8 Q298.2,117.6 309.8,125.8 V137.9 Q298.2,130.2 286.1,138.7 Z" fill="#67ace6"/><path d="M278.8,119.7 L286.1,125.8 V138.7 L278.8,131.4 Z" fill="#4490cc"/><path d="M311,125.8 L318.3,119.3 V131 L311,138.3 Z" fill="#fff" stroke="#444" stroke-width="1"/><defs><clipPath id="hc"><circle cx="349.7" cy="125.8" r="7.6"/></clipPath></defs><path d="M333.2,110.5 L340.5,103.2 H372.3 L365.8,110.5 Z" fill="#ececec" stroke="#555" stroke-width="1" stroke-linejoin="round"/><path d="M365.8,110.5 L372.3,103.2 V135.5 L365.8,142.3 Z" fill="#bdbdbd" stroke="#555" stroke-width="1" stroke-linejoin="round"/><path d="M333.2,110.5 H365.8 V142.3 H333.2 Z" fill="#d8d8d8" stroke="#555" stroke-width="1" stroke-linejoin="round"/><circle cx="349.7" cy="125.8" r="9.6" fill="#f4f4f4" stroke="#555" stroke-width="1"/><circle cx="349.7" cy="125.8" r="7.6" fill="#5fa8e4"/><circle cx="353.6" cy="121.3" r="7" fill="#eeeeee" clip-path="url(#hc)"/><rect x="386.9" y="105.7" width="7.5" height="7.5" fill="#fff" stroke="#555" stroke-width="1"/><rect x="412.5" y="105.2" width="8.5" height="8.5" fill="#62ace8"/><rect x="386.4" y="131.4" width="8.5" height="8.5" fill="#62ace8"/><rect x="412.5" y="131.4" width="8.5" height="8.5" fill="#62ace8"/><path d="M396.4,109.4 H410.9 M390.6,114.9 V129.8 M396.4,135.6 H410.9" stroke="#555" stroke-width="1"/><path d="M440.2,121 Q440.2,112 447,107.5 L451,105.3 H461 L471,112 L477.6,122 V132 Q477.6,136 474,139 L470,142.3 H449 Q440.2,142.3 440.2,133 Z" fill="#caa8f2" stroke="#a27cdc" stroke-width="0.9"/><path d="M442.9,121.5 Q442.9,116.9 447.5,116.9 H465 Q469.4,116.9 469.4,121.5 V135.5 Q469.4,140 465,140 H447.5 Q442.9,140 442.9,135.5 Z" fill="#a87de8"/><path d="M469.4,125.5 L476,121 V132 Q476,135 472,138.5 L469.4,140 Z" fill="#9466d6"/><path d="M453.6,106 V141.5 M442.5,126.7 Q455,128.5 469.4,126.7" stroke="#8a5cc8" stroke-width="0.8" fill="none"/><path d="M469.40,103.80 L470.70,109.41 L475.04,105.63 L472.80,110.93 L478.53,110.43 L473.60,113.40 L478.53,116.37 L472.80,115.87 L475.04,121.17 L470.70,117.39 L469.40,123.00 L468.10,117.39 L463.76,121.17 L466.00,115.87 L460.27,116.37 L465.20,113.40 L460.27,110.43 L466.00,110.93 L463.76,105.63 L468.10,109.41 Z" fill="#f5a300"/><g fill="none" stroke="#4a9fe0" stroke-linecap="round"><path d="M499,109 Q507,118 511.5,122 Q516.5,116.5 525,112.5" stroke-width="3.2"/><path d="M508,118.5 L511.5,132 L515,118.5" stroke-width="3"/></g><path d="M508.8,120 L511.6,127.3 L514.2,120 Z" fill="#f2f2f2"/><circle cx="511.5" cy="135.7" r="6" fill="#4a9fe0"/><circle cx="511.5" cy="135.7" r="4.7" fill="#fff" stroke="#555" stroke-width="1"/><circle cx="511.5" cy="135.7" r="1.9" fill="none" stroke="#555" stroke-width="1"/><rect x="494.5" y="103.5" width="7.3" height="7.2" fill="#fff" stroke="#555" stroke-width="1"/><path d="M522.2,111.5 L525.5,106.2 L530.8,108.5 L533,113 L526.5,116.5 Z" fill="#fff" stroke="#555" stroke-width="1" stroke-linejoin="round"/><path d="M563,142.5 V110.4 L569.8,103.3 H576.2 L569.8,110.4 V142.5 Z" fill="#dcdcdc" stroke="#555" stroke-width="1" stroke-linejoin="round"/><path d="M571.1,110.4 H582.2 V142.6 H571.1 Z" fill="#67ace6"/><path d="M571.1,110.4 L578.4,103.3 H589.5 L582.2,110.4 Z" fill="#8ecbf8"/><path d="M582.2,110.4 L589.5,103.3 V134.9 L582.2,142.6 Z" fill="#4490cc"/><rect x="586.5" y="120.3" width="5" height="3.6" fill="#f2f2f2"/><path d="M587.4,122.1 H594.5" stroke="#333" stroke-width="1.3"/><path d="M593.3,119.4 L598.5,122.1 L593.3,124.8 Z" fill="#333"/><path d="M615.4,112.6 L624.6,103.4 H635.1 L629.7,111.4 L615.4,112.6 Z" fill="#f4f4f4"/><path d="M615.4,112.6 H629.7 Q644,114 646,128.5 V142.4 H615.4 Z" fill="#d8d8d8"/><path d="M646,128.5 L654.8,119.8 V132.7 L645.1,142.4 Z" fill="#bdbdbd"/><path d="M635.1,103 Q652.5,107 654.8,119.8 L646,128.1 Q644,113.5 629.7,111.4 Z" fill="#64aae4"/><path d="M635.1,103.4 H624.6 L615.4,112.6 V142.4 H645.1 L654.8,132.7 V121.8" fill="none" stroke="#555" stroke-width="1" stroke-linejoin="round"/><path d="M669.4,112.6 L678.6,103.4 H698.7 L698.7,112.6 Z M678.6,103.4 H708.8 L698.7,112.6 Z" fill="#f4f4f4"/><path d="M669.4,112.6 H698.7 V142.4 H669.4 Z" fill="#d8d8d8"/><path d="M698.7,112.6 L708.8,103.4 V132.7 L698.7,142.4 Z" fill="#bdbdbd"/><rect x="672.8" y="116.1" width="22.6" height="22.6" fill="#f0f0f0"/><path d="M674,118.1 H683.6 V127.7 L674,137.3 Z" fill="#4493d0"/><path d="M674,137.3 L683.6,127.7 H693.7 V137.7 H674 Z" fill="#8ecbf8"/><path d="M669.4,112.6 L678.6,103.4 H708.8 V132.7 L698.7,142.4 H669.4 Z" fill="none" stroke="#555" stroke-width="1" stroke-linejoin="round"/><path d="M735.1,108 H757.3 V129.8 H735.1 Z" fill="#67ace6"/><path d="M735.1,108 L740.1,103.2 H762.3 L757.3,108 Z" fill="#8ecbf8"/><path d="M757.3,108 L762.3,103.2 V124.8 L757.3,129.8 Z" fill="#4490cc"/><path d="M722.6,120.2 H745.1 V142.8 H722.6 Z" fill="#67ace6"/><path d="M722.6,120.2 L727.6,115.2 H735.1 V120.2 Z" fill="#8ecbf8"/><path d="M745.1,129.8 L749.7,125.6 V138.2 L745.1,142.8 Z" fill="#4490cc"/><path d="M779.3,110 H806 V122.5 H779.3 Z" fill="#67ace6"/><path d="M779.3,110 L786.4,103.2 H814 L806,110 Z" fill="#8ecbf8"/><path d="M806,110 L814,103.2 V114.4 L806,122.5 Z" fill="#4490cc"/><path d="M776.2,126.2 H806.5 L816.2,116.4" fill="none" stroke="#fff" stroke-width="3"/><path d="M776.2,126.2 H806.5 L816.2,116.4" fill="none" stroke="#1e8ae6" stroke-width="1.4"/><path d="M779.3,128.7 H806.5 V141.1 H779.3 Z" fill="#dadada"/><path d="M806.5,128.7 L813.6,123.3 V134.5 L806.5,141.1 Z" fill="#bdbdbd"/><path d="M779.3,128.7 V141.1 H806.5 L813.6,134.5 V123.3" fill="none" stroke="#555" stroke-width="1" stroke-linejoin="round"/><g fill="#c6c6c6"><rect x="849.1" y="110" width="1.9" height="25"/><rect x="837" y="121.6" width="25" height="1.9"/><path d="M850,103.3 L855.8,112.7 H844.2 Z M850,142 L855.8,133.1 H844.2 Z M830.5,122.5 L839.8,116.7 V128.3 Z M869.6,122.5 L860.2,116.7 V128.3 Z"/></g><path d="M902.9,116.7 L910,110 H934.5 L925,116.7 Z" fill="#f0f0f0"/><path d="M902.9,116.7 H925 V139.3 H902.9 Z" fill="#dadada"/><path d="M925,116.7 L934.5,108.2 V124.7 L925,133 Z" fill="#c0c0c0"/><path d="M915.8,139.3 H902.9 V116.7 L905,114.6 M920.3,108.2 H934.5 V124.7" fill="none" stroke="#555" stroke-width="1"/><path d="M897.6,108.1 H907.8 V103.2 L920.3,110.4 L907.8,117.4 V112.7 H897.6 Z" fill="#1a8ae6"/><g transform="rotate(-40,927,133.5)"><rect x="917" y="129.6" width="11.5" height="7.8" rx="3.9" fill="none" stroke="#222" stroke-width="2.3"/><rect x="925.5" y="129.6" width="11.5" height="7.8" rx="3.9" fill="none" stroke="#222" stroke-width="2.3"/></g><g transform="translate(951,103)" opacity="0.55"><path d="M0,9 L5,5 H19 V18 L14,22 H0 Z" fill="#aed4f2"/><path d="M0,22 H14 V40 H0 Z" fill="#e2e2e2" stroke="#ccc" stroke-width="0.8"/><path d="M15,22 L20,18 H35 V36 L30,40 H15 Z" fill="#e6e6e6" stroke="#ccc" stroke-width="0.8"/><path d="M29,2 L31,8 L37,6 L33,11 L39,13 L33,15 L35,21 L29,17 L25,21 L25,15 L19,13 L25,10 L22,5 L27,7 Z" fill="#eec27a"/></g><path d="M1022.4,126.4 H1005.8 V139.4 H1022.4" fill="none" stroke="#5a5a5a" stroke-width="1.3"/><rect x="1023.6" y="105.5" width="1.4" height="35" fill="#d42a2a"/><rect x="1026.2" y="105.9" width="17.5" height="14.3" fill="#66aee6" stroke="#5a9ad2" stroke-width="0.7"/><rect x="1059.5" y="103.5" width="7.6" height="7.2" fill="#66aee6" stroke="#4a8fcc" stroke-width="0.8"/><path d="M1059.7,110.7 H1074.5 V118.5 H1059.7 Z M1067.1,110.7 V118.5" fill="#f4f4f4" stroke="#555" stroke-width="1.1"/><path d="M1065.4,120.3 V140 M1065.4,124.6 H1074.8 M1065.4,131 H1074.8 M1065.4,137.3 H1074.8" stroke="#8a8a8a" stroke-width="0.9"/><rect x="1078.5" y="113.8" width="20.8" height="25.6" fill="#fff" stroke="#666" stroke-width="1.3"/><rect x="1078.5" y="113.8" width="20.8" height="3.8" fill="#666"/><rect x="1080" y="115.3" width="1.6" height="1.2" fill="#fff"/><path d="M1078.5,122.2 H1099.3 M1078.5,127.2 H1099.3 M1078.5,132.2 H1099.3 M1078.5,137 H1099.3 M1084,117.6 V139.4" stroke="#777" stroke-width="0.9"/><g transform="translate(1133,103)"><path d="M0.5,8 L8,0.5 H35 V27 L28,35 H0.5 Z" fill="#d9d9d9" stroke="#555" stroke-width="1"/><path d="M28,8 L35,0.5 V27 L28,35 Z" fill="#bcbcbc"/><rect x="22" y="29" width="18" height="3" fill="#555"/><rect x="22" y="36" width="18" height="3" fill="#555"/><rect x="27" y="26" width="3" height="8" fill="#1e88e5"/><rect x="33" y="33" width="3" height="8" fill="#555"/></g><g transform="translate(1187,103)"><rect x="1" y="0.5" width="37" height="36" fill="#fff" stroke="#555" stroke-width="1.4"/><rect x="1" y="0.5" width="37" height="6" fill="#555"/><rect x="4" y="2" width="5" height="2.5" fill="#fff"/><rect x="5" y="11" width="27" height="21" fill="none" stroke="#555" stroke-width="1.2"/><path d="M5,18 H32 M5,25 H32 M12,11 V32 M19,11 V32" stroke="#555" stroke-width="1.2"/><rect x="22" y="27" width="18" height="10" fill="#f2f2f2"/><rect x="22" y="29" width="18" height="3" fill="#555"/><rect x="22" y="36" width="18" height="3" fill="#555"/><rect x="27" y="26" width="3" height="8" fill="#1e88e5"/><rect x="33" y="33" width="3" height="8" fill="#555"/></g><g transform="translate(1295,103)"><path d="M0.5,38.5 V11 L10,0.5 H20 L11,11 V38.5 Z" fill="#dedede" stroke="#555" stroke-width="1"/><path d="M11,38.5 V11 L22,0.5 V28 Z" fill="#56c27c" stroke="#3a9a5a" stroke-width="0.6"/><path d="M26.2,38.2 V11.1 L37.7,0.2 V27.8 Z" fill="#e3996a"/></g><g transform="translate(1435,113)"><rect x="0" y="12" width="35" height="8" fill="#f5a300"/><rect x="3.0" y="12" width="1" height="4" fill="#8a5a00"/><rect x="7.2" y="12" width="1" height="3" fill="#8a5a00"/><rect x="11.4" y="12" width="1" height="4" fill="#8a5a00"/><rect x="15.6" y="12" width="1" height="3" fill="#8a5a00"/><rect x="19.8" y="12" width="1" height="4" fill="#8a5a00"/><rect x="24.0" y="12" width="1" height="3" fill="#8a5a00"/><rect x="28.2" y="12" width="1" height="4" fill="#8a5a00"/><path d="M1,0 V9 M34,0 V9 M2,5 H33" stroke="#555" stroke-width="1.2"/><path d="M2,5 L6,2.5 V7.5 Z M33,5 L29,2.5 V7.5 Z" fill="#555"/></g><g transform="translate(1544,104)"><path d="M0,3 Q0,0 3,0 H28 Q30,0 30,3 V9 H0 Z" fill="#6ab0ea"/><rect x="8" y="0" width="15" height="9" fill="#8ccaf6"/><rect x="7" y="9" width="16" height="29" rx="2" fill="#8ccaf6"/><path d="M7,12.0 L23,10.5" stroke="#4a92d0" stroke-width="1"/><path d="M7,15.2 L23,13.7" stroke="#4a92d0" stroke-width="1"/><path d="M7,18.4 L23,16.9" stroke="#4a92d0" stroke-width="1"/><path d="M7,21.6 L23,20.1" stroke="#4a92d0" stroke-width="1"/><path d="M7,24.8 L23,23.3" stroke="#4a92d0" stroke-width="1"/><path d="M7,28.0 L23,26.5" stroke="#4a92d0" stroke-width="1"/><path d="M7,31.2 L23,29.7" stroke="#4a92d0" stroke-width="1"/><path d="M7,34.4 L23,32.9" stroke="#4a92d0" stroke-width="1"/><path d="M7,37.6 L23,36.1" stroke="#4a92d0" stroke-width="1"/><rect x="20.2" y="26.5" width="16.8" height="5" fill="#22b04a"/><rect x="26.3" y="21.2" width="5" height="17.4" fill="#22b04a"/></g><g transform="translate(1596.5,104.5)"><rect x="0" y="0" width="36" height="35" fill="#8ccbf5" stroke="#4a92d0" stroke-width="1"/><path d="M0,36 V20 Q9,9 16,18 Q21,25 26,21 Q32,17 37,23 V36 Z" fill="#3d8bcf"/><circle cx="26.5" cy="9" r="3.8" fill="#fafad0"/></g><g transform="translate(1696,98)"><rect x="0" y="0" width="48.5" height="48.5" rx="1.5" fill="#0a96d8"/><rect x="4.5" y="4.8" width="34.5" height="26.5" fill="none" stroke="#a3e88e" stroke-width="1.3" stroke-dasharray="4,2.6"/><path d="M30,22 V43 L34.5,38.5 L38,45.5 L41,44 L37.8,37.2 L44,37 Z" fill="#fff"/></g><g transform="translate(1805,103)"><rect x="1" y="0.5" width="16" height="39" fill="#f4f4f4" stroke="#666" stroke-width="1.2"/><rect x="17.5" y="0.5" width="22" height="16" fill="#66aee6" stroke="#4a8fcc" stroke-width="0.6"/></g><g transform="translate(1859,103)"><rect x="1" y="0.5" width="16" height="39" fill="#f4f4f4" stroke="#666" stroke-width="1.2"/><path d="M20,0.5 H39.5 V16.5 H20" fill="none" stroke="#555" stroke-width="1.3" stroke-dasharray="3.5,2.5"/></g></svg>
</body></html>
